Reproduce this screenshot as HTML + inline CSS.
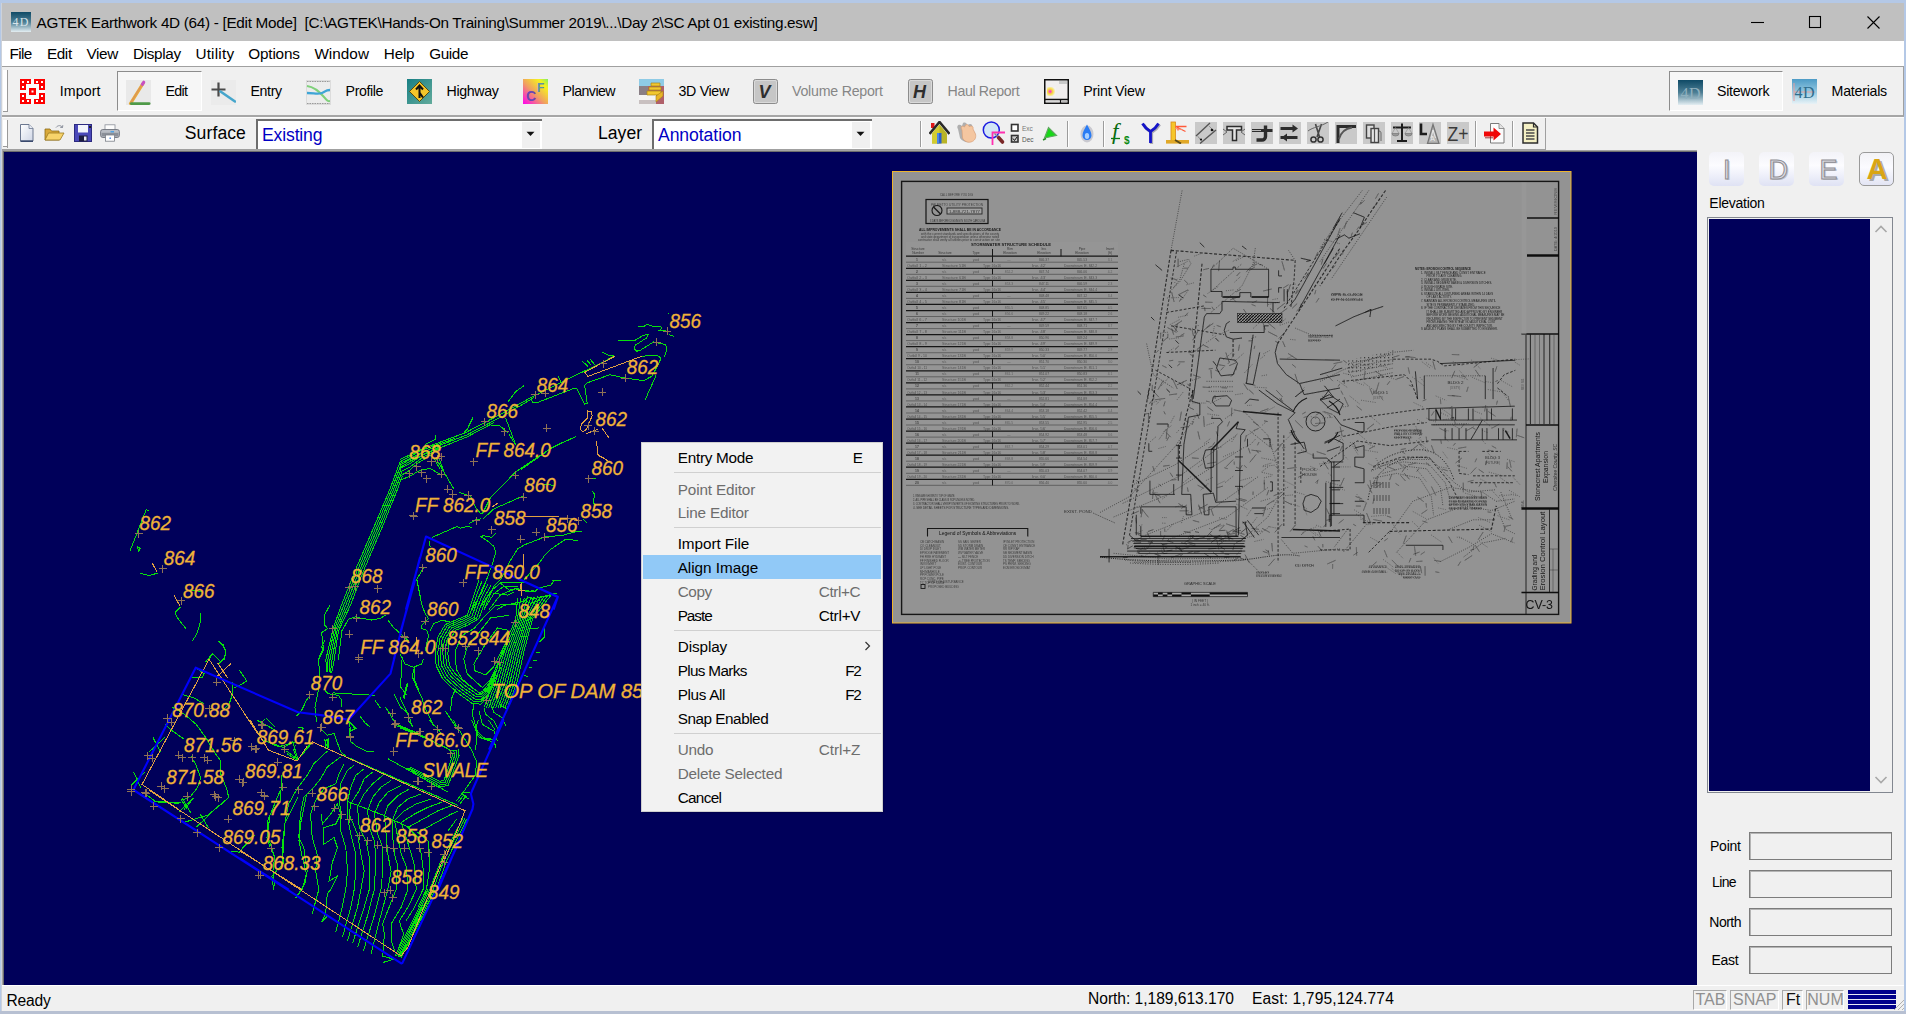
<!DOCTYPE html>
<html><head><meta charset="utf-8"><title>AGTEK Earthwork 4D</title>
<style>
html,body{margin:0;padding:0;}
body{width:1906px;height:1014px;overflow:hidden;position:relative;background:#f0f0f0;font-family:"Liberation Sans",sans-serif;font-size:15px;color:#000;}
.a{position:absolute;white-space:nowrap;}
.t{position:absolute;white-space:nowrap;line-height:20px;height:20px;}
#frame{left:0;top:0;width:1906px;height:1014px;background:#b4c8e6;}
#title{left:2px;top:3px;width:1902px;height:38px;background:#c0c0c0;}
#menubar{left:2px;top:41px;width:1902px;height:25px;background:#fff;}
#tb1{left:2px;top:66px;width:1902px;height:49px;background:#f0f0f0;border-top:1px solid #a0a0a0;box-sizing:border-box;}
#tb2{left:2px;top:113px;width:1902px;height:38px;background:#f0f0f0;border-top:2px solid #a8a8a8;box-sizing:border-box;}
#canvas{left:4px;top:152px;width:1693px;height:833px;background:#00005a;overflow:hidden;}
#rpanel{left:1697px;top:151px;width:207px;height:835px;background:#f0f0f0;}
#status{left:2px;top:985px;width:1902px;height:26px;background:#f0f0f0;}
.mi{top:43px;font-size:15.3px;}
.tbt{top:81px;font-size:14.6px;}
.gr{color:#838383;}
.lab{font-size:18.5px;top:122px;}
.combo{background:#fff;border-top:2px solid #696969;border-left:2px solid #696969;box-sizing:border-box;height:32px;top:118px;}
.combo span{position:absolute;left:3px;top:5px;font-size:18.5px;color:#0000c8;line-height:20px;}
.fld{border:1px solid #8a8a8a;border-top:2px solid #777;border-left:2px solid #777;box-sizing:border-box;background:#f0f0f0;left:1749px;width:143px;height:29px;}
.fl{font-size:14.5px;left:1709px;}
.ind{top:990px;height:19px;box-sizing:border-box;border:1px solid #b8b8b8;border-right-color:#fff;border-bottom-color:#fff;font-size:17px;color:#8a8a8a;line-height:19px;text-align:center;}
#cm{left:640.5px;top:441.5px;width:242.5px;height:370px;background:#f2f2f2;border:1px solid #cfcfcf;box-sizing:border-box;box-shadow:1px 1px 2px rgba(0,0,0,.18);}
.ci{left:36px;font-size:15.3px;line-height:20px;}
.ck{font-size:15.3px;line-height:20px;right:22px;}
.dis{color:#7a7a7a;}
.sep{left:33px;width:206px;height:1px;background:#d2d2d2;}
.lb{font-style:italic;fill:#f0b238;stroke:#f0b238;stroke-width:.3px;font-family:"Liberation Sans",sans-serif;font-size:20px;}
</style></head><body>
<div id="frame" class="a"></div>
<div id="title" class="a"></div>
<svg class="a" style="left:11px;top:12px" width="20" height="20"><defs><linearGradient id="g4d" x1="0" y1="0" x2="0" y2="1"><stop offset="0" stop-color="#0f4a66"/><stop offset=".5" stop-color="#4d7f95"/><stop offset="1" stop-color="#e4eef2"/></linearGradient></defs><rect width="20" height="20" fill="url(#g4d)"/><text x="1.5" y="14" font-family="Liberation Serif,serif" font-size="12" fill="#d8e4ea" textLength="16">4D</text></svg>
<div class="a" style="left:36.50px;top:13.65px;font-size:15.30px;line-height:17.59px;letter-spacing:-0.300px;white-space:pre;">AGTEK Earthwork 4D (64) - [Edit Mode]  [C:\AGTEK\Hands-On Training\Summer 2019\...\Day 2\SC Apt 01 existing.esw]</div>
<svg class="a" style="left:1740px;top:3px" width="160" height="38"><g stroke="#000" stroke-width="1.1" fill="none"><path d="M11 19.5H24"/><rect x="69.5" y="13.5" width="11" height="11"/><path d="M127.5 13.5L139.5 25.5M139.5 13.5L127.5 25.5"/></g></svg>
<div id="menubar" class="a"></div>
<div class="a" style="left:9.60px;top:45.35px;font-size:15.30px;line-height:17.59px;letter-spacing:-0.688px;">File</div>
<div class="a" style="left:46.90px;top:45.35px;font-size:15.30px;line-height:17.59px;letter-spacing:-0.366px;">Edit</div>
<div class="a" style="left:86.40px;top:45.35px;font-size:15.30px;line-height:17.59px;letter-spacing:-0.346px;">View</div>
<div class="a" style="left:132.90px;top:45.35px;font-size:15.30px;line-height:17.59px;letter-spacing:-0.309px;">Display</div>
<div class="a" style="left:195.40px;top:45.35px;font-size:15.30px;line-height:17.59px;letter-spacing:0.214px;">Utility</div>
<div class="a" style="left:248.30px;top:45.35px;font-size:15.30px;line-height:17.59px;letter-spacing:-0.189px;">Options</div>
<div class="a" style="left:314.40px;top:45.35px;font-size:15.30px;line-height:17.59px;letter-spacing:0.031px;">Window</div>
<div class="a" style="left:383.80px;top:45.35px;font-size:15.30px;line-height:17.59px;letter-spacing:-0.216px;">Help</div>
<div class="a" style="left:429.20px;top:45.35px;font-size:15.30px;line-height:17.59px;letter-spacing:-0.405px;">Guide</div>
<div id="tb1" class="a"></div>
<div class="a" style="left:2px;top:115px;width:1902px;height:2px;background:#a6a6a6"></div>
<div class="a" style="left:2px;top:117px;width:1902px;height:1px;background:#fbfbfb"></div>
<div class="a" style="left:2px;top:118px;width:1902px;height:33px;background:#f0f0f0"></div>
<div class="a" style="left:2px;top:149px;width:1544px;height:2px;background:#a0a0a0"></div>
<div class="a" style="left:1545px;top:118px;width:1px;height:32px;background:#a0a0a0"></div>
<div class="a" style="left:1px;top:3px;width:1px;height:1008px;background:#cdd2da"></div>
<div class="a" style="left:2px;top:151px;width:1695px;height:1px;background:#6e6e6e"></div>
<div class="a" style="left:2px;top:151px;width:1px;height:834px;background:#a2a2a2"></div>
<div class="a" style="left:3px;top:151px;width:1px;height:834px;background:#6e6e6e"></div>
<div class="a" style="left:3px;top:70px;width:4px;height:41px;background:#fff"></div>
<div class="a" style="left:3px;top:120px;width:4px;height:27px;background:#fff"></div>
<div class="a" style="left:3px;top:146px;width:5px;height:1px;background:#9a9a9a"></div>
<div class="a" style="left:3px;top:111px;width:5px;height:1px;background:#9a9a9a"></div>
<div class="a" style="left:2px;top:150px;width:1695px;height:1px;background:#a4a4a4"></div>
<div class="a" id="bottomstrip" style="left:0;top:1011px;width:1906px;height:3px;background:#b7c0d2"></div>
<div class="a" style="left:7px;top:70px;width:1px;height:41px;background:#9a9a9a"></div>
<div class="a" style="left:7px;top:120px;width:1px;height:28px;background:#9a9a9a"></div>
<div class="a" style="left:1903px;top:67px;width:1px;height:49px;background:#a0a0a0"></div>
<div class="a" style="left:117px;top:71px;width:85px;height:40px;background:#f6f6f6;box-sizing:border-box;border:1px solid #8c8c8c;border-right-color:#fff;border-bottom-color:#fff"></div>
<div class="a" style="left:1669px;top:71px;width:114px;height:40px;background:#f6f6f6;box-sizing:border-box;border:1px solid #8c8c8c;border-right-color:#fff;border-bottom-color:#fff"></div>
<div class="a" style="left:59.80px;top:82.65px;font-size:14.20px;line-height:16.33px;letter-spacing:0.110px;">Import</div>
<div class="a" style="left:165.40px;top:83.45px;font-size:14.20px;line-height:16.33px;letter-spacing:-0.617px;">Edit</div>
<div class="a" style="left:250.40px;top:82.65px;font-size:14.20px;line-height:16.33px;letter-spacing:-0.348px;">Entry</div>
<div class="a" style="left:345.60px;top:82.65px;font-size:14.20px;line-height:16.33px;letter-spacing:-0.407px;">Profile</div>
<div class="a" style="left:446.60px;top:82.65px;font-size:14.20px;line-height:16.33px;letter-spacing:-0.351px;">Highway</div>
<div class="a" style="left:562.60px;top:82.65px;font-size:14.20px;line-height:16.33px;letter-spacing:-0.541px;">Planview</div>
<div class="a" style="left:678.50px;top:82.65px;font-size:14.20px;line-height:16.33px;letter-spacing:-0.317px;">3D View</div>
<div class="a" style="left:792.00px;top:82.65px;font-size:14.20px;line-height:16.33px;letter-spacing:-0.233px;color:#868686;">Volume Report</div>
<div class="a" style="left:947.50px;top:82.65px;font-size:14.20px;line-height:16.33px;letter-spacing:-0.361px;color:#868686;">Haul Report</div>
<div class="a" style="left:1083.30px;top:82.65px;font-size:14.20px;line-height:16.33px;letter-spacing:-0.216px;">Print View</div>
<div class="a" style="left:1717.00px;top:83.45px;font-size:14.20px;line-height:16.33px;letter-spacing:-0.269px;">Sitework</div>
<div class="a" style="left:1831.60px;top:82.65px;font-size:14.20px;line-height:16.33px;letter-spacing:-0.245px;">Materials</div>
<svg class="a" style="left:20px;top:79px" width="25" height="25" viewBox="0 0 25 25" ><rect x="-.5" y="-.5" width="26" height="26" fill="#fbfbfb"/><g fill="#fe0000"><path d="M0 0h11v5h-5v6h-6z"/><path d="M25 0h-11v5h5v6h6z"/><path d="M0 25h11v-5h-5v-6h-6z"/><path d="M25 25h-11v-5h5v-6h6z"/><rect x="9" y="9" width="7" height="7"/></g><rect x="2" y="2" width="2" height="2" fill="#fff"/><rect x="7" y="2" width="2" height="2" fill="#fff"/><rect x="2" y="7" width="2" height="2" fill="#fff"/><rect x="21" y="2" width="2" height="2" fill="#fff"/><rect x="16" y="2" width="2" height="2" fill="#fff"/><rect x="21" y="7" width="2" height="2" fill="#fff"/><rect x="2" y="21" width="2" height="2" fill="#fff"/><rect x="7" y="21" width="2" height="2" fill="#fff"/><rect x="2" y="16" width="2" height="2" fill="#fff"/><rect x="21" y="21" width="2" height="2" fill="#fff"/><rect x="16" y="21" width="2" height="2" fill="#fff"/><rect x="21" y="16" width="2" height="2" fill="#fff"/><rect x="11.5" y="11.5" width="2" height="2" fill="#fff"/></svg>
<svg class="a" style="left:126px;top:80px" width="25" height="25" viewBox="0 0 25 25" ><rect width="25" height="25" fill="#e9e9e9"/><path d="M4.5 23.5L17 3.5" stroke="#e8a93a" stroke-width="3.2" stroke-linecap="round"/><path d="M16.2 4.6l1.6-2.4" stroke="#c74fc4" stroke-width="3" stroke-linecap="round"/><path d="M5.2 23.6h18" stroke="#4f9a48" stroke-width="2.6" stroke-linecap="round"/><path d="M5 22.3L15.8 4.8" stroke="#d48a6a" stroke-width=".9" fill="none"/></svg>
<svg class="a" style="left:211px;top:80px" width="25" height="25" viewBox="0 0 25 25" ><rect width="25" height="25" fill="#ebebeb"/><path d="M7.5 2.5v14M.5 9.5h14" stroke="#4a4a4a" stroke-width="2.2"/><path d="M9.5 11.5L24 21.5" stroke="#46a6cc" stroke-width="2.6" stroke-linecap="round"/></svg>
<svg class="a" style="left:306px;top:80px" width="25" height="25" viewBox="0 0 25 25" ><rect width="25" height="25" fill="#dcdcdc"/><rect x="1" y="2" width="23" height="21" fill="#ececec"/><path d="M1 6C8 7 13 11 18 17S23 21 24 21" stroke="#7fd07a" stroke-width="2" fill="none"/><path d="M1 13C8 13 12 14.5 16 13S19 10 24 10" stroke="#3fa5d6" stroke-width="2.4" fill="none"/><path d="M1 1.5h23M1 23.5h23" stroke="#9a9a9a" stroke-width="1" stroke-dasharray="1.5 1"/></svg>
<svg class="a" style="left:407px;top:79px" width="25" height="25" viewBox="0 0 25 25" ><defs><linearGradient id="hw" x1="0" y1="0" x2="1" y2="1"><stop offset="0" stop-color="#187f84"/><stop offset="1" stop-color="#63ab9c"/></linearGradient></defs><rect width="25" height="25" fill="url(#hw)"/><path d="M12.5 2.5L22.5 12.5L12.5 22.5L2.5 12.5Z" fill="#f5c62a" stroke="#5a4a10" stroke-width="1"/><path d="M12.5 19V7M9 10.5L12.5 6.5L16 10.5M12.8 14L16 18.5" stroke="#111" stroke-width="2" fill="none"/></svg>
<svg class="a" style="left:523px;top:79px" width="25" height="25" viewBox="0 0 25 25" ><defs><linearGradient id="pv" x1="0" y1="1" x2="1" y2="0"><stop offset="0" stop-color="#ff00f0"/><stop offset=".45" stop-color="#f0a060"/><stop offset=".8" stop-color="#f6f020"/><stop offset="1" stop-color="#80f060"/></linearGradient></defs><rect width="25" height="25" fill="url(#pv)"/><text x="3" y="22" font-family="Liberation Sans,sans-serif" font-weight="bold" font-size="14" fill="#6a46b4">C</text><text x="14" y="12.5" font-family="Liberation Sans,sans-serif" font-weight="bold" font-size="12" fill="#5a90b0">F</text></svg>
<svg class="a" style="left:639px;top:79px" width="25" height="25" viewBox="0 0 25 25" ><rect width="25" height="25" fill="#b0606a"/><rect width="25" height="7" fill="#8ecbe6"/><rect y="7" width="9" height="9" fill="#8a7f86"/><rect y="16" width="17" height="5" fill="#f4f4f4"/><rect y="21" width="17" height="4" fill="#c8c0c0"/><path d="M12 4h9v3h-9zM10 8h12v3h-12zM8 12h14v4h-14z" fill="#f2c730" stroke="#a88418" stroke-width=".7"/><path d="M17 17l7-5v5l-7 6z" fill="#e8b428" stroke="#a88418" stroke-width=".6"/></svg>
<svg class="a" style="left:753px;top:79px" width="25" height="25" viewBox="0 0 25 25" ><rect x=".5" y=".5" width="24" height="24" rx="2" fill="#c6c6c6" stroke="#8c8c8c"/><rect x="1.5" y="1.5" width="22" height="22" rx="1.5" fill="none" stroke="#dadada"/><text x="5.5" y="19" font-family="Liberation Sans,sans-serif" font-weight="bold" font-style="italic" font-size="18" fill="#2e2e2e">V</text></svg>
<svg class="a" style="left:908px;top:79px" width="25" height="25" viewBox="0 0 25 25" ><rect x=".5" y=".5" width="24" height="24" rx="2" fill="#c6c6c6" stroke="#8c8c8c"/><rect x="1.5" y="1.5" width="22" height="22" rx="1.5" fill="none" stroke="#dadada"/><text x="5" y="19" font-family="Liberation Sans,sans-serif" font-weight="bold" font-style="italic" font-size="18" fill="#2e2e2e">H</text></svg>
<svg class="a" style="left:1044px;top:79px" width="25" height="25" viewBox="0 0 25 25" ><defs><radialGradient id="pr" cx=".35" cy=".5" r=".6"><stop offset="0" stop-color="#ff20e0"/><stop offset=".5" stop-color="#f8e040"/><stop offset="1" stop-color="#f4f0f0"/></radialGradient></defs><rect x=".75" y=".75" width="23.5" height="23.5" fill="#f1eeee" stroke="#111" stroke-width="1.5"/><rect x="3" y="8" width="9" height="9" fill="url(#pr)"/><rect x="15" y="2" width="8" height="3" fill="#c9c9c9"/><path d="M1 20.5h23M16.5 20.5v4" stroke="#111" stroke-width="1.3"/><rect x="2" y="21.6" width="13.5" height="1.6" fill="#d8d8d8"/><rect x="17.6" y="21.6" width="5.6" height="1.6" fill="#bbb"/></svg>
<svg class="a" style="left:1678px;top:80px" width="25" height="25" viewBox="0 0 25 25" ><rect width="25" height="25" fill="url(#g4d)"/><text x="2.5" y="19" font-family="Liberation Serif,serif" font-size="16" fill="#8fb0be" textLength="20">4D</text></svg>
<svg class="a" style="left:1792px;top:79px" width="25" height="25" viewBox="0 0 25 25" ><defs><linearGradient id="mt" x1="0" y1="0" x2="0" y2="1"><stop offset="0" stop-color="#4d9bc6"/><stop offset=".55" stop-color="#9acbe2"/><stop offset="1" stop-color="#e8f2f6"/></linearGradient></defs><rect width="25" height="25" fill="url(#mt)"/><path d="M2 4v18M2 13h21" stroke="#e7a0a0" stroke-width="1"/><text x="2.5" y="19" font-family="Liberation Serif,serif" font-size="16" fill="#2f6c8c" textLength="20">4D</text></svg>
<svg class="a" style="left:20px;top:124px" width="16" height="18" viewBox="0 0 16 18" ><defs><linearGradient id="nd" x1="0" y1="0" x2="1" y2="1"><stop offset="0" stop-color="#fff"/><stop offset="1" stop-color="#cfd6e6"/></linearGradient></defs><path d="M.5 .5h8.5l4 4v12.5h-12.5z" fill="url(#nd)" stroke="#6c7890" stroke-width="1"/><path d="M9 .5v4h4" fill="#e8ecf4" stroke="#6c7890" stroke-width=".8"/><path d="M.5 17.2h12.5" stroke="#2c3e64" stroke-width="1.4"/></svg>
<svg class="a" style="left:44px;top:124px" width="21" height="18" viewBox="0 0 21 18" ><path d="M1 16V5h5l1.5 2H15v9z" fill="#d9a93a" stroke="#8a6a18" stroke-width=".8"/><path d="M1 16l3.5-7h15.5l-4 7z" fill="#f7d36a" stroke="#9a7a20" stroke-width=".8"/><path d="M12 3.5c2-2.5 5-2.5 6.5 0M18.5 3.5l.3-2.3M18.5 3.5l-2.3-.2" stroke="#8a8f9c" stroke-width="1" fill="none"/></svg>
<svg class="a" style="left:74px;top:124px" width="18" height="18" viewBox="0 0 18 18" ><rect x=".5" y=".5" width="17" height="17" fill="#4a48b8" stroke="#2c2a80"/><rect x="4" y="1" width="10" height="7.5" fill="#f2f4fb"/><rect x="5" y="11.5" width="8.5" height="6" fill="#1c1c40"/><rect x="10" y="12.5" width="2.5" height="4" fill="#e8e8f4"/><rect x="15" y="2" width="2" height="2" fill="#222"/></svg>
<svg class="a" style="left:100px;top:124px" width="20" height="18" viewBox="0 0 20 18" ><rect x="5" y=".8" width="10" height="6" fill="#fdfdfd" stroke="#8a8f98" stroke-width=".8"/><rect x=".6" y="5.5" width="18.8" height="8" rx="2.2" fill="#b9bdc4" stroke="#6e737c" stroke-width=".9"/><rect x="1.6" y="8.8" width="16.8" height="3.6" fill="#8b9098"/><rect x="5.5" y="11" width="9" height="6.2" fill="#fff" stroke="#7a7f88" stroke-width=".8"/><rect x="10.5" y="7.2" width="3.5" height="1.2" fill="#3a9be8"/><rect x="9.5" y="13.5" width="1.4" height="1.4" fill="#3a7fe0"/></svg>
<div class="a" style="left:184.80px;top:122.87px;font-size:17.60px;line-height:20.24px;letter-spacing:0.078px;">Surface</div>
<div class="a" style="left:597.90px;top:122.87px;font-size:17.60px;line-height:20.24px;letter-spacing:0.056px;">Layer</div>
<div class="a" style="left:256px;top:119px;width:285.5px;height:30px;background:#fff;box-sizing:border-box;border-top:2px solid #6d6d6d;border-left:2px solid #6d6d6d;"></div>
<div class="a" style="left:521.5px;top:122px;width:18px;height:26px;background:#f0f0f0;"></div>
<svg class="a" style="left:526px;top:131px" width="9" height="6"><path d="M.5 .8h8L4.5 5z" fill="#111"/></svg>
<div class="a" style="left:262.00px;top:125.07px;font-size:17.60px;line-height:20.24px;letter-spacing:-0.153px;color:#0000c4;">Existing</div>
<div class="a" style="left:652px;top:119px;width:219.5px;height:30px;background:#fff;box-sizing:border-box;border-top:2px solid #6d6d6d;border-left:2px solid #6d6d6d;"></div>
<div class="a" style="left:851.5px;top:122px;width:18px;height:26px;background:#f0f0f0;"></div>
<svg class="a" style="left:856px;top:131px" width="9" height="6"><path d="M.5 .8h8L4.5 5z" fill="#111"/></svg>
<div class="a" style="left:658.00px;top:125.07px;font-size:17.60px;line-height:20.24px;letter-spacing:-0.075px;color:#0000c4;">Annotation</div>
<div class="a" style="left:919.5px;top:121px;width:1px;height:26px;background:#9c9c9c"></div>
<div class="a" style="left:920.5px;top:121px;width:1px;height:26px;background:#fff"></div>
<div class="a" style="left:1067.3px;top:121px;width:1px;height:26px;background:#9c9c9c"></div>
<div class="a" style="left:1068.3px;top:121px;width:1px;height:26px;background:#fff"></div>
<div class="a" style="left:1103.3px;top:121px;width:1px;height:26px;background:#9c9c9c"></div>
<div class="a" style="left:1104.3px;top:121px;width:1px;height:26px;background:#fff"></div>
<div class="a" style="left:1475.4px;top:121px;width:1px;height:26px;background:#9c9c9c"></div>
<div class="a" style="left:1476.4px;top:121px;width:1px;height:26px;background:#fff"></div>
<div class="a" style="left:1511.5px;top:121px;width:1px;height:26px;background:#9c9c9c"></div>
<div class="a" style="left:1512.5px;top:121px;width:1px;height:26px;background:#fff"></div>
<svg class="a" style="left:929px;top:121px" width="21" height="23" viewBox="0 0 21 23" ><path d="M2 2h3.5v5H2z" fill="#e01818"/><path d="M.5 13L10.5 1l10 12" fill="none" stroke="#2a2a2a" stroke-width="2.6"/><path d="M3 12.5L10.5 3.5L18 12.5V22.5H3z" fill="#b8b428"/><path d="M3 12.5L10.5 3.5V22.5H3z" fill="#d2cc30"/><rect x="8" y="12" width="4.5" height="10.5" fill="#2a5fd0"/><rect x="8" y="12" width="2" height="10.5" fill="#4a86e8"/></svg>
<svg class="a" style="left:955px;top:121px" width="23" height="23" viewBox="0 0 23 23" ><path d="M3 8c-2-3 1-6 4-3l1-3c2-1 4 0 4 2l3-1c2 0 3 2 2 4l3 5c1 4-1 8-5 9c-4 1-8-1-10-4z" fill="#9a9a9a" opacity=".75"/><path d="M7 9c-2-3 0-5 2.5-3l1-2c2-1 3 0 3.500 1.500l2-.5c2 0 2.500 1.500 2 3l2.500 5c1 4-1 7-4.500 8c-3.500 1-7-1-8.500-4z" fill="#f4c6a0" stroke="#d89a70" stroke-width=".6"/></svg>
<svg class="a" style="left:982px;top:121px" width="25" height="24" viewBox="0 0 25 24" ><circle cx="9.3" cy="9" r="8" fill="#d2e6f6" stroke="#1c1ce0" stroke-width="1.5"/><path d="M10.5 24V11.500H23" fill="none" stroke="#ff30b0" stroke-width="1.8"/><path d="M16.500 16.500l4 4.500" stroke="#7a2828" stroke-width="3.600" stroke-linecap="round"/><path d="M12.500 12.500l3 3" stroke="#888" stroke-width="1.2"/></svg>
<svg class="a" style="left:1010px;top:123px" width="24" height="22" viewBox="0 0 24 22" ><rect x="1.500" y="1.500" width="6.500" height="6.500" fill="#fff" stroke="#333" stroke-width="1.6"/><rect x="1.500" y="12.500" width="6.500" height="6.500" fill="#ccc" stroke="#333" stroke-width="1.6"/><path d="M3 15.500l1.500 2 2.500-3.500" stroke="#111" stroke-width="1" fill="none"/><text x="12" y="7.500" font-size="6.500" fill="#777" font-family="Liberation Sans,sans-serif">Exc</text><text x="12" y="18.500" font-size="6.500" fill="#555" font-family="Liberation Sans,sans-serif">Dec</text></svg>
<svg class="a" style="left:1041px;top:124px" width="18" height="18" viewBox="0 0 18 18" ><path d="M3.500 14L7.500 3.500L15.500 11.500Z" fill="#18d818" stroke="#60a860" stroke-width="1.2"/><path d="M2 16l3-1.500" stroke="#2a8a2a" stroke-width="1.4"/></svg>
<svg class="a" style="left:1079px;top:123px" width="16" height="20" viewBox="0 0 16 20" ><ellipse cx="8" cy="11" rx="6.500" ry="8.500" fill="#9a9aa8" opacity=".45"/><path d="M8 1.500C10.500 6 12.500 9 12.500 12.500a4.500 4.500 0 0 1-9 0C3.500 9 5.500 6 8 1.500z" fill="#2a7cf4"/><ellipse cx="8" cy="13" rx="2.200" ry="3" fill="#a8d0ff"/></svg>
<svg class="a" style="left:1110px;top:121px" width="24" height="24" viewBox="0 0 24 24" ><text x="2" y="18" font-family="Liberation Serif,serif" font-style="italic" font-size="23" fill="#0a6a10">f</text><path d="M1 17.500h9" stroke="#0a7a12" stroke-width="1.300"/><text x="14" y="23" font-family="Liberation Sans,sans-serif" font-weight="bold" font-size="10" fill="#0a8a12">$</text></svg>
<svg class="a" style="left:1140px;top:122px" width="22" height="22" viewBox="0 0 22 22" ><path d="M2.500 1.500C5 6 8 8 10.500 9.500V21M18.500 1.500C16 6 13 8 10.500 9.500" fill="none" stroke="#7a7a88" stroke-width="3.200" transform="translate(1,1)" opacity=".6"/><path d="M2.500 1.500C5 6 8 8 10.500 9.500V21M18.500 1.500C16 6 13 8 10.500 9.500" fill="none" stroke="#1414c8" stroke-width="2.800"/></svg>
<svg class="a" style="left:1166px;top:121px" width="24" height="23" viewBox="0 0 24 23" ><rect x="5" y="1" width="4.500" height="18.500" fill="#f6c62a" stroke="#d88a18" stroke-width=".8"/><path d="M9.500 5.500h11M9.500 5.500l10 5M12 5.500v4" stroke="#ff5a3a" stroke-width="1.300"/><path d="M9 7.500l7 1" stroke="#ff8a6a" stroke-width="1"/><rect x="0" y="19" width="23" height="3.600" fill="#e0a828"/><path d="M9 19l6 3.500" stroke="#5a4a18" stroke-width="2"/></svg>
<svg class="a" style="left:1194.85px;top:122px" width="22" height="22" viewBox="0 0 22 22" ><rect width="22" height="22" fill="#c9c9c9"/><path d="M1 14L15 1M5 21.500L21 8" stroke="#555" stroke-width="1.400"/><path d="M3 14.500l4 5M14.500 4.500l4 4" stroke="#666" stroke-width="1" stroke-dasharray="1.500 1"/><circle cx="17" cy="8" r="1.300" fill="#111"/><circle cx="6" cy="17.500" r="1.100" fill="#111"/></svg>
<svg class="a" style="left:1222.88px;top:122px" width="22" height="22" viewBox="0 0 22 22" ><rect width="22" height="22" fill="#c9c9c9"/><path d="M4 4.500h14.500v3.500H13.500v10.500H9.500V8H4z" fill="#e4e4e4" stroke="#2c2c2c" stroke-width="1.500"/><path d="M0 7l4 3-4 3M22 7l-4 3 4 3" stroke="#666" stroke-width="1" fill="none"/></svg>
<svg class="a" style="left:1250.91px;top:122px" width="22" height="22" viewBox="0 0 22 22" ><rect width="22" height="22" fill="#c9c9c9"/><path d="M14.500 3.500V14.500a3.500 3.500 0 0 1-3.500 3.500H5.500" fill="none" stroke="#2c2c2c" stroke-width="3.400"/><path d="M1 8.500h20.500" stroke="#2c2c2c" stroke-width="3"/><path d="M1 8.500h9" stroke="#ddd" stroke-width=".8"/></svg>
<svg class="a" style="left:1278.94px;top:122px" width="22" height="22" viewBox="0 0 22 22" ><rect width="22" height="22" fill="#c9c9c9"/><path d="M1.500 6.500h15M1.500 15.500h17" stroke="#2c2c2c" stroke-width="2.800"/><path d="M13.500 2.500l5.500 4-5.500 4zM8 11.500l-5.500 4 5.500 4z" fill="#2c2c2c"/></svg>
<svg class="a" style="left:1306.97px;top:122px" width="22" height="22" viewBox="0 0 22 22" ><rect width="22" height="22" fill="#c9c9c9"/><path d="M8.500 2l4 13M14.500 2l-4.500 13" stroke="#444" stroke-width="1.600"/><circle cx="6.500" cy="17.500" r="2.600" fill="none" stroke="#333" stroke-width="1.500"/><circle cx="13.500" cy="17.500" r="2.600" fill="none" stroke="#333" stroke-width="1.500"/><path d="M1 9c5-4 12-4 20-9" stroke="#666" stroke-width="1" fill="none"/></svg>
<svg class="a" style="left:1335px;top:122px" width="22" height="22" viewBox="0 0 22 22" ><rect width="22" height="22" fill="#c9c9c9"/><path d="M3 21V4.500h18" fill="none" stroke="#2c2c2c" stroke-width="3"/><path d="M4 17C6 10 10 6.500 17 5.500" fill="none" stroke="#555" stroke-width="1.800"/></svg>
<svg class="a" style="left:1363.03px;top:122px" width="22" height="22" viewBox="0 0 22 22" ><rect width="22" height="22" fill="#c9c9c9"/><rect x="3.500" y="3" width="7.500" height="13" fill="#ddd" stroke="#444" stroke-width="1.400"/><rect x="8" y="6.500" width="7.500" height="14" fill="#e4e4e4" stroke="#444" stroke-width="1.400"/><path d="M11.500 7v13" stroke="#555" stroke-width="1.200"/><path d="M16 9c2 0 2 1.500 2 3v7" stroke="#666" stroke-width="1" fill="none"/></svg>
<svg class="a" style="left:1391.06px;top:122px" width="22" height="22" viewBox="0 0 22 22" ><rect width="22" height="22" fill="#c9c9c9"/><path d="M11 1.500v16.500M2 5.500h18M6 19h10" stroke="#1c1c1c" stroke-width="2"/><path d="M1 11.500a3.500 2.500 0 0 0 7 0zM14 11.500a3.500 2.500 0 0 0 7 0z" fill="#999" stroke="#777" stroke-width=".7"/><path d="M4.500 5.500l-3.500 6M4.500 5.500l3.500 6M17.500 5.500l-3.500 6M17.500 5.500l3.500 6" stroke="#888" stroke-width=".6"/></svg>
<svg class="a" style="left:1419.09px;top:122px" width="22" height="22" viewBox="0 0 22 22" ><rect width="22" height="22" fill="#c9c9c9"/><path d="M2 1.500V12h6" fill="none" stroke="#1c1c1c" stroke-width="2.600"/><path d="M14 2.500L8.500 21.500H20z" fill="#b4b4b4" stroke="#777" stroke-width="1.300"/><path d="M14 8l-2 8M14 8l2.500 8" stroke="#eee" stroke-width=".9"/><text x="11.300" y="19" font-size="7" fill="#eee" font-family="Liberation Sans,sans-serif">A</text></svg>
<svg class="a" style="left:1447.12px;top:122px" width="22" height="22" viewBox="0 0 22 22" ><rect width="22" height="22" fill="#c9c9c9"/><text x=".5" y="18.500" font-family="Liberation Sans,sans-serif" font-size="20" fill="#3a3a3a" textLength="21" lengthAdjust="spacingAndGlyphs">Z+</text></svg>
<svg class="a" style="left:1484px;top:122px" width="22" height="22" viewBox="0 0 22 22" ><path d="M6.500 1.500h8.500l5 5V21H6.500z" fill="#fbfbfb" stroke="#7a7a7a" stroke-width="1"/><path d="M15 1.500v5h5" fill="#e4e4e4" stroke="#7a7a7a" stroke-width=".8"/><path d="M0 9.500h9.500V5.500L17 12l-7.500 6.500V14.500H0z" fill="#f00808"/><path d="M1 15.800h8" stroke="#8a1010" stroke-width=".8"/></svg>
<svg class="a" style="left:1522px;top:122px" width="17" height="22" viewBox="0 0 17 22" ><path d="M1 1h10.500l4 4V21H1z" fill="#f4f0c4" stroke="#2c2c2c" stroke-width="1.500"/><path d="M11.500 1v4h4" fill="none" stroke="#2c2c2c" stroke-width="1.200"/><path d="M4 8h8.500M4 11h8.500M4 14h8.500M4 17h8.500" stroke="#4a4a4a" stroke-width="1.300"/></svg>
<div id="canvas" class="a">
<svg class="a" style="left:-4px;top:-152px" width="1906" height="1014" viewBox="0 0 1906 1014">
<g fill="none" stroke="#06e00c" stroke-width="1" shape-rendering="crispEdges"><path d="M400.0 459.5L425.2 447.8L465.5 432.6L500.7 414.2L534.3 395.7L567.9 378.9L601.5 363.0L613.2 356.2M400.0 463.7L426.9 450.3L466.3 435.2L502.4 416.2L534.3 397.4M400.0 467.6L410.1 461.2L428.5 452.5L467.2 436.8L494.0 422.6M531.0 399.1L532.6 402.4L537.7 402.4L574.6 388.1L577.1 389.0L584.7 404.1L587.2 403.3L584.7 385.6L586.4 383.1L609.9 374.7L625.0 378.1L643.5 380.6L651.8 376.4L658.6 363.8L661.1 357.9L656.9 355.4L641.8 356.2M637.6 326.5L643.5 326.9L646.8 324.3L651.8 326.0L660.2 326.0L661.9 328.5L659.4 330.2L667.0 331.1M668.6 334.4L673.7 336.1M667.8 312.6L669.5 314.3M618.3 340.3L635.1 340.3L643.5 335.3L648.5 334.4L646.8 337.8L635.1 345.3L634.2 348.7L636.7 351.2L640.1 350.4L653.5 342.0L656.9 342.8L665.3 344.5L667.0 348.7L664.4 357.1M656.0 375.6L645.1 399.9M602.3 352.4L609.0 355.4L614.1 355.4M582.2 361.3L588.0 366.3M586.4 359.6L591.4 365.5M589.7 358.8L594.8 364.6M524.2 385.6L515.8 391.5L507.5 402.4M557.8 375.6L561.2 382.3M473.0 417.5L467.2 429.3L464.6 431.8M435.3 435.2L435.3 439.4L425.2 444.4M490.7 424.2L491.5 425.6L499.1 425.1L507.5 432.6M505.8 418.4L515.8 445.2M509.1 434.3L515.8 445.2M576.3 436.3L551.9 447.8L520.9 469.6M433.6 457.8L440.3 469.6M400.0 461.8L421.8 450.1L455.4 438.3M400.0 465.2L422.7 452.1L442.0 444.2M400.0 468.5L410.1 463.5L423.5 454.3L440.3 446.7M400.0 471.9L410.1 466.9L423.5 456.8L438.6 449.2M400.0 476.1L408.4 471.1L418.5 462.7L433.6 453.4M436.1 458.5L453.7 488.7M439.5 459.3L444.5 473.6M400.0 480.3L410.1 476.1L420.1 470.2L430.2 468.5L442.0 475.3M458.8 492.4L470.5 496.2L475.6 507.2L480.6 513.5L483.9 512.2M567.9 440.0L551.9 447.6L515.8 471.9L490.7 497.1L482.3 513.9M522.6 496.2L494.0 508.8L483.1 518.9M544.4 484.5L554.5 485.3M468.8 523.9L475.6 519.8L480.6 518.9M431.9 537.4L457.1 526.5L460.4 528.1L467.2 526.5L472.2 527.3M480.3 536.5L483.9 535.7L491.5 537.4L495.7 533.2M480.3 536.5L487.3 540.7L494.0 546.6L495.7 552.5L492.3 564.2L482.3 591.1L472.2 609.6M429.4 540.7L430.2 547.5M423.5 567.6L416.8 579.4L421.8 604.5M582.2 531.5L576.3 531.5L561.2 535.7L546.1 536.5L524.2 544.9L517.5 549.1L509.1 562.6L500.7 579.4L494.0 586.1L483.9 609.6M578.0 540.4L565.4 539.4L551.1 549.1L544.4 555.8L537.7 565.1L524.2 579.4M592.2 491.2L594.8 494.6L593.1 502.1L595.6 506.3M586.4 478.6L596.4 478.6M583.0 518.9L587.2 523.1M561.2 580.2L553.6 580.7L551.1 585.2L539.4 587.8L534.3 591.9L525.1 590.3L515.8 589.4M525.1 582.7L500.7 582.7L490.7 591.1L478.9 609.6M517.5 586.1L504.1 586.1L494.0 593.6L483.9 609.6M514.2 589.4L500.7 594.5L489.0 609.6M557.0 593.1L534.3 598.7L527.6 597.0L524.2 601.2L504.1 605.4L497.4 609.6M478.9 580.0L473.9 595.1L467.2 615.3L457.1 619.5L445.3 624.5L437.8 637.1L435.3 652.2L436.1 665.6L442.8 679.1L457.1 692.5L472.2 703.4L480.6 704.2L487.3 697.5L494.0 684.1M481.9 581.3L476.2 596.1L469.5 615.9L459.1 620.6L447.3 625.7L440.0 638.1L437.8 652.5L438.8 665.6L445.3 678.1L459.1 690.8L473.5 701.2L480.9 701.7L487.3 695.2L494.4 681.4M485.0 582.7L478.6 597.1L471.9 616.6L461.1 621.8L449.4 626.8L442.1 639.1L440.3 652.9L441.5 665.6L447.9 677.0L461.1 689.1L474.9 699.0L481.3 699.2L487.3 692.8L494.7 678.7M488.0 584.0L480.9 598.1L474.2 617.3L463.1 623.0L451.4 628.0L444.3 640.1L442.8 653.2L444.2 665.6L450.4 676.0L463.1 687.5L476.2 696.9L481.6 696.7L487.3 690.5L495.0 676.0M491.0 585.4L483.3 599.1L476.6 617.9L465.1 624.2L453.4 629.2L446.5 641.1L445.3 653.5L446.8 665.6L452.9 675.0L465.1 685.8L477.6 694.7L481.9 694.2L487.3 688.1L495.4 673.4M494.0 586.7L485.6 600.1L478.9 618.6L467.2 625.3L455.4 630.4L448.7 642.1L447.9 653.9L449.5 665.6L455.4 674.0L467.2 684.1L478.9 692.5L482.3 691.7L487.3 685.8L495.7 670.7M517.5 604.3L495.7 605.2L485.6 615.3L473.9 628.7L462.1 635.4L455.4 650.5L456.2 669.0L462.1 679.1L480.6 694.2L490.7 687.5L500.7 667.3M509.1 615.3L490.7 617.8L480.6 630.4L467.2 647.2L463.8 658.9L467.2 674.0L482.3 687.5L490.7 679.1L510.8 635.4M508.3 630.4L497.4 627.9L485.6 643.8L473.9 663.9L474.7 670.7L485.6 674.9L493.2 667.3L507.5 638.8M517.5 598.5L515.8 618.6L502.4 650.5L491.5 687.5L483.9 707.6M520.9 598.1L517.5 618.6L504.6 650.5L494.1 686.8L486.3 707.6M524.2 597.8L519.2 618.6L506.8 650.5L496.7 686.1L488.7 707.6M527.6 597.5L520.9 618.6L509.0 650.5L499.3 685.4L491.0 707.6M531.0 597.1L522.6 618.6L511.1 650.5L501.9 684.8L493.4 707.6M534.3 596.8L524.2 618.6L513.3 650.5L504.5 684.1L495.7 707.6M537.7 596.5L525.9 618.6L515.5 650.5L507.1 683.4L498.1 707.6M541.0 596.1L527.6 618.6L517.7 650.5L509.7 682.8L500.4 707.6M544.4 595.8L529.3 618.6L519.9 650.5L512.3 682.1L502.8 707.6M547.8 595.4L531.0 618.6L522.1 650.5L514.9 681.4L505.1 707.6M551.1 595.1L532.6 618.6L524.2 650.5L517.5 680.7L507.5 707.6M483.9 707.6L485.6 714.3L494.0 721.0L499.1 731.1M490.7 704.2L494.0 712.6L502.4 717.7L505.8 726.1M497.4 697.5L500.7 705.9L507.5 709.3M478.9 711.0L482.3 724.4L494.0 731.1L497.4 741.2M473.9 704.2L472.2 714.3L477.2 731.1L475.6 749.6M477.2 731.1L483.9 737.8L494.0 739.5L495.7 747.9M421.8 604.5L425.2 613.6L428.5 618.6L421.8 625.3L421.8 628.7L426.9 630.4L428.5 635.4L425.2 650.5M416.8 580.0L421.8 604.5M400.0 653.9L405.0 663.9L413.4 667.3L421.8 663.9L423.5 658.9M413.4 669.0L412.6 677.4L416.8 687.5L421.8 697.5L423.5 704.2L433.6 726.1M400.0 697.5L410.1 719.4L411.8 726.1M406.7 684.1L403.4 697.5M455.4 689.1L452.0 697.5L450.4 711.0M445.3 711.0L455.4 726.1L458.8 731.1M400.0 727.8L416.8 734.5L447.0 747.9M450.4 622.0L442.0 620.3L433.6 623.7L430.2 630.4M544.4 625.3L544.4 637.1L539.4 642.1M536.0 652.2L540.2 652.2M532.6 660.6L536.8 660.6M529.3 667.3L532.6 668.1M524.2 675.7L528.4 676.5M527.6 628.7L539.4 627.9M551.9 580.0L561.2 580.8M527.6 596.8L534.3 598.5L551.1 595.1M524.2 600.1L531.0 603.5L539.4 600.1M500.7 583.4L509.1 590.1L517.5 588.4L527.6 591.8L534.3 590.1M494.0 593.4L507.5 595.1L514.2 591.8M344.1 756.1L458.3 805.6M347.5 757.3L456.6 804.8M387.8 758.6L448.2 792.2M458.3 749.4L459.1 755.3L448.2 785.5L438.1 787.2L406.2 768.7M456.0 750.2L456.9 755.5L446.8 783.8L438.7 785.2L407.3 768.1M453.8 751.1L454.6 755.8L445.4 782.1L439.2 783.2L408.5 767.6M451.6 751.9L452.4 756.1L444.0 780.4L439.8 781.3L409.6 767.0M282.0 775.4L280.3 800.6L270.2 814.0L266.9 837.5L270.2 847.6M327.3 751.1L313.9 763.7L307.2 775.4L297.1 788.8L288.7 803.9L285.3 820.7L282.0 847.6L283.7 862.7L271.9 876.1L273.6 889.6M340.7 756.9L327.3 767.0L320.6 778.8L313.9 787.2L303.8 797.2L300.4 814.0L298.8 837.5L303.8 847.6L307.2 871.1L302.1 889.6M344.1 763.7L339.1 773.7L335.7 783.8L323.9 788.8L315.6 800.6L310.5 814.0L312.2 837.5L317.2 854.3L315.6 871.1L318.9 889.6M321.4 814.0L322.3 824.1L330.7 814.0L337.4 803.9L340.7 814.0L335.7 824.1L323.9 827.5L323.9 844.2L334.0 837.5L337.4 847.6L332.3 862.7L329.0 881.2L337.4 876.1L330.7 889.6M354.2 765.3L347.5 770.4L340.7 783.8L339.1 795.6L340.7 814.0L340.7 830.8L345.8 847.6L347.5 871.1L345.8 889.6M364.2 768.7L355.8 775.4L350.8 787.2L347.5 800.6L347.5 817.4L350.8 834.2L355.8 854.3L355.8 871.1L354.2 889.6M372.6 772.0L364.2 778.8L359.2 790.5L350.8 803.9L349.1 814.0L357.5 834.2L360.9 854.3L364.2 871.1L360.9 889.6M382.7 775.4L372.6 783.8L364.2 793.9L357.5 807.3L359.2 827.5L365.9 840.9L369.3 857.7L369.3 889.6M391.1 780.4L381.0 787.2L372.6 797.2L367.6 810.7L369.3 827.5L374.3 840.9L376.0 857.7L374.3 889.6M401.2 785.5L387.8 792.2L379.4 802.3L374.3 814.0L377.7 834.2L382.7 847.6L382.7 871.1L381.0 889.6M409.6 788.8L397.8 795.6L387.8 805.6L384.4 815.7L386.1 834.2L387.8 854.3L391.1 871.1L387.8 889.6M421.3 793.9L407.9 798.9L397.8 807.3L392.8 819.1L392.8 837.5L394.5 854.3L397.8 866.1L396.1 889.6M431.4 798.9L416.3 803.9L404.5 810.7L394.5 820.7L397.8 837.5L401.2 854.3L406.2 866.1L407.9 889.6M441.5 802.3L428.0 807.3L414.6 814.0L401.2 822.4L406.2 837.5L411.3 854.3L414.6 866.1L416.3 889.6M451.6 805.6L438.1 810.7L423.0 819.1L407.9 827.5L418.0 837.5L421.3 854.3L423.0 867.8L423.0 889.6M458.3 810.7L448.2 815.7L433.1 824.1L418.0 832.5L428.0 840.9L429.7 854.3L429.7 867.8L426.4 889.6M347.5 801.4L384.4 815.7L394.5 820.7L409.6 827.5M429.7 889.6L441.5 859.4L463.3 817.4M433.1 889.6L444.0 860.2L465.0 818.2M436.4 889.6L446.5 861.0L466.7 819.1M320.6 728.4L327.3 735.1L334.0 733.4L340.7 751.9L345.8 756.1M349.1 728.4L350.8 741.8L357.5 746.9L365.9 751.1L374.3 751.9M350.8 723.4L355.8 728.4L349.1 731.8M323.9 738.5L327.3 746.9L328.1 738.5M394.5 725.0L418.0 733.4L449.9 750.2L456.6 750.2M407.9 720.0L412.9 726.7M429.7 720.0L441.5 733.4M453.2 720.0L463.3 736.8L471.7 750.2L476.7 762.0L475.1 775.4L463.3 792.2L456.6 800.6M471.7 720.0L478.4 736.8L491.8 741.8M488.5 720.0L495.2 730.1M478.4 720.0L475.1 730.1L481.8 738.5L493.5 740.1M463.3 792.2L470.0 792.2M456.6 800.6L461.6 793.9L465.8 795.6M458.3 802.3L463.3 795.6L467.5 797.2M459.9 803.9L465.0 797.2L469.2 798.9M297.1 760.3L293.7 750.2L295.4 745.2M287.0 753.6L297.1 760.3L308.8 746.9L312.2 741.8M256.8 720.0L275.3 730.1M263.5 740.1L278.6 746.9L295.4 741.8M448.2 830.8L456.6 819.1M302.1 889.5L295.4 897.9M318.9 889.5L317.2 895.4L312.2 913.9M330.7 889.5L327.3 893.7L325.6 913.9L321.4 922.3M345.8 889.5L340.7 913.9L335.7 932.3M354.2 889.5L350.8 907.2L342.4 937.4M360.9 889.5L357.5 907.2L347.5 940.7M369.3 889.5L364.2 907.2L352.5 943.3M374.3 889.5L367.6 915.6L357.5 947.5M381.0 889.5L374.3 915.6L363.4 950.8M387.8 889.5L379.4 920.6L371.0 954.2M396.1 889.5L387.8 910.5L382.7 923.9L384.4 934.0L382.7 957.5M407.9 889.5L401.2 907.2L391.1 923.9L391.1 940.7L394.5 950.8M416.3 889.5L407.9 907.2L399.5 920.6L401.2 927.3L403.7 934.0L397.8 950.8M423.0 889.5L414.6 907.2L406.2 920.6M426.4 889.5L418.0 907.2M428.0 889.5L412.9 920.6L395.3 955.8M429.9 889.5L414.6 920.3L396.5 956.2M431.7 889.5L416.3 919.9L397.7 956.5M433.6 889.5L418.0 919.6L398.8 956.9M435.4 889.5L419.7 919.2L400.0 957.2M437.3 889.5L421.3 918.9L401.2 957.5M382.7 962.6L393.6 959.2L387.8 957.5L382.7 955.8M321.4 922.3L327.3 916.4M400.0 462.0L389.6 490.0L375.4 523.6L355.2 570.6L341.8 604.2L333.4 627.7L325.8 659.6M400.6 465.5L391.5 490.0L377.5 523.6L357.3 570.6L343.9 604.6L334.6 628.5L327.9 659.6M401.1 469.0L393.4 490.0L379.6 523.6L359.4 570.6L346.0 605.0L335.9 629.4L330.0 659.6M401.7 472.5L395.3 490.0L381.6 523.6L361.5 570.6L348.1 605.4L337.2 630.2L332.1 659.6M402.2 476.1L397.2 490.0L383.7 523.6L363.6 570.6L350.2 605.8L338.4 631.0L334.2 659.6M330.0 605.0L325.0 614.2L324.1 624.3L327.5 628.5L321.6 632.7L323.3 647.8L318.3 659.6M338.4 659.6L341.8 631.0L348.5 619.3L355.2 616.8L361.9 618.4L372.0 620.1L380.4 618.4L385.4 615.1M387.9 620.1L393.8 627.7L400.5 633.6L408.9 641.1M130.2 550.4L146.2 509.8L149.5 510.5M137.3 546.2L140.3 548.8L138.6 551.3L137.3 546.2M140.3 573.1L148.7 575.6L157.9 573.1M180.6 606.7L175.2 612.6L177.2 617.6L186.5 629.4M200.7 613.4L199.9 624.3L196.5 634.4L192.3 640.8M218.4 641.1L223.4 646.1L225.9 652.0L224.2 659.6M209.1 659.6L212.5 653.7L217.5 658.7M191.5 590.4L202.4 591.4M218.4 640.8L223.4 645.0L225.9 651.8L224.2 658.5L219.2 663.5M205.8 661.8L212.5 653.4L220.9 661.8M239.4 670.2L246.9 681.1L241.0 684.5L234.3 687.9M195.7 667.7L204.1 673.6L202.4 677.3L192.3 677.8M232.6 682.0L232.6 693.7L229.3 703.8L224.2 708.8M182.3 694.6L194.0 697.9L204.1 703.8M172.2 707.2L183.9 713.9L195.7 723.9L205.8 737.4L215.8 754.2L220.9 760.9L220.9 774.3L227.6 791.1L228.4 797.8L214.2 809.6M164.6 723.9L172.2 730.7L183.9 739.1M190.7 755.8L195.7 764.2L200.7 777.7L197.4 787.8L190.7 796.1L183.9 799.5M147.0 795.3L155.4 801.2L167.2 802.0L178.9 803.7M152.9 737.4L160.4 751.7M149.5 751.7L164.6 737.4M133.6 771.8L141.1 788.6M131.1 785.2L145.3 771.8M180.6 798.7L187.3 809.6M194.0 797.8L183.9 809.6M325.8 659.6L326.7 671.9M327.9 659.6L327.9 672.1M330.0 659.6L329.2 672.3M332.1 659.6L330.4 672.5M334.2 659.6L331.7 672.7M318.3 660.1L323.3 650.1L321.6 646.7L325.0 640.0M316.6 722.3L314.9 707.2L318.3 690.4L319.9 673.6L318.3 660.1M296.4 716.4L301.5 710.5L306.5 700.4L309.9 695.4M325.0 690.4L328.3 693.7L338.4 695.4L341.8 700.4L341.8 707.2M333.4 692.9L375.4 695.4M374.5 699.6L380.4 708.0M385.4 707.2L388.8 712.2L395.5 723.9L420.0 734.0M393.8 693.7L400.5 707.2L408.9 713.9M408.1 682.8L403.9 699.6M402.2 656.8L400.5 687.0L407.3 695.4M414.0 666.9L414.0 678.6L419.0 690.4M360.2 716.4L365.3 723.1L370.3 727.3M348.5 720.6L355.2 729.0L351.0 730.7L348.5 720.6M325.0 740.7L328.3 739.1L328.3 747.5L325.0 749.1L325.0 740.7M265.4 718.9L261.2 722.3M266.2 718.1L275.5 727.3M298.1 727.3L303.2 728.1L301.5 731.5M292.2 740.7L298.1 759.2L309.9 744.1M286.4 750.8L297.3 759.2M274.6 744.1L283.0 747.5L293.1 742.4M182.3 798.4L190.7 812.7M178.9 811.8L193.2 798.4M199.9 813.5L208.3 827.8M196.5 826.9L210.8 813.5M148.7 795.9L155.4 801.8L167.2 802.6L180.6 802.6M227.6 790.0L228.4 797.6L224.2 801.8L207.5 815.2L185.6 821.9M254.5 835.3L242.7 847.9L239.4 852.1L231.0 851.3M280.5 790.0L267.9 820.2L267.9 837.0L274.6 857.2L272.9 870.6L274.6 885.7M298.1 796.7L284.7 823.6L283.0 853.8L281.3 868.9M306.5 795.0L300.6 823.6L299.0 840.4L301.5 853.8L306.5 873.9L304.8 884.0L295.6 898.3"/></g>
<g fill="none" stroke="#e0a040" stroke-width="1" shape-rendering="crispEdges"><path d="M584.7 372.2L588.0 376.4L641.8 356.2M584.7 372.2L614.9 356.2M587.2 410.8L591.4 411.7L592.2 415.8L586.4 429.3L583.0 431.8L580.5 429.3L581.3 424.2L588.0 417.5L587.2 410.8M601.5 427.6L609.0 437.7M586.4 433.5L598.1 429.3M596.4 441.0L598.1 455.3L601.5 457.0L608.2 461.2M596.4 440.8L598.1 455.1L601.5 456.8L608.2 461.0M525.1 516.4L558.7 516.4M523.4 554.2L523.4 567.6M520.9 584.4L521.2 596.1M491.5 507.2L498.2 503.0M521.2 583.4L521.2 596.0M517.5 590.4L525.1 590.4M416.0 637.1L416.8 646.3M250.1 720.0L268.5 750.2L297.1 761.1L307.2 746.0M312.2 741.8L465.0 810.7L458.3 827.5L443.2 862.7M240.0 851.0L302.1 889.6M394.5 951.7L401.2 955.8L407.9 947.5L446.5 850.1M152.4 563.4L157.1 572.3M173.9 594.9L179.8 605.8M178.9 809.6L142.0 784.4L209.1 659.3L257.8 734.0M217.5 662.7L227.6 677.8M231.0 663.5L217.5 676.1M148.7 790.0L394.5 951.7"/></g>
<g fill="none" stroke="#0000fc" stroke-width="2.1" stroke-linejoin="round"><path d="M405.9 609.6L426.0 536.5L557.8 597.0L553.6 609.6M415.1 580.0L400.0 633.7M520.9 580.0L557.8 596.8L489.0 749.6M503.6 720.0L472.5 789.7L470.9 793.9L473.4 803.9L472.5 809.0L438.1 889.6M240.0 858.5L288.7 889.6M402.0 963.9L459.9 840.0M420.0 557.2L393.8 659.6M133.6 789.4L195.7 667.7L298.1 712.2L325.0 715.6L348.5 719.8L390.5 673.6L395.5 653.4L398.9 640.0M133.6 790.0L402.0 963.9"/></g>
<g fill="none" stroke="#8f7256" stroke-width="1" shape-rendering="crispEdges"><path d="M663.0 331.1h8M667.0 327.1v8M652.9 342.0h8M656.9 338.0v8M599.2 363.5h8M603.2 359.5v8M621.0 378.1h8M625.0 374.1v8M598.3 392.0h8M602.3 388.0v8M531.2 394.9h8M535.2 390.9v8M541.2 393.2h8M545.2 389.2v8M480.8 421.7h8M484.8 417.7v8M500.9 431.8h8M504.9 427.8v8M542.9 428.4h8M546.9 424.4v8M584.0 425.9h8M588.0 421.9v8M590.8 431.0h8M594.8 427.0v8M469.9 461.5h8M473.9 457.5v8M437.1 456.5h8M441.1 452.5v8M433.8 458.7h8M437.8 454.7v8M427.1 461.5h8M431.1 457.5v8M469.9 461.5h8M473.9 457.5v8M511.0 475.3h8M515.0 471.3v8M422.9 478.6h8M426.9 474.6v8M443.9 489.0h8M447.9 485.0v8M448.9 494.1h8M452.9 490.1v8M464.0 495.4h8M468.0 491.4v8M409.4 515.9h8M413.4 511.9v8M472.4 520.6h8M476.4 516.6v8M519.4 497.1h8M523.4 493.1v8M584.9 478.6h8M588.9 474.6v8M487.5 529.8h8M491.5 525.8v8M532.0 532.3h8M536.0 528.3v8M516.9 539.4h8M520.9 535.4v8M540.7 537.4h8M544.7 533.4v8M563.9 518.9h8M567.9 514.9v8M574.0 520.6h8M578.0 516.6v8M418.7 567.6h8M422.7 563.6v8M459.0 582.7h8M463.0 578.7v8M405.2 473.6h8M409.2 469.6v8M412.8 466.9h8M416.8 462.9v8M427.9 461.8h8M431.9 457.8v8M417.8 472.7h8M421.8 468.7v8M437.1 474.4h8M441.1 470.4v8M459.0 582.5h8M463.0 578.5v8M421.2 621.1h8M425.2 617.1v8M400.2 636.2h8M404.2 632.2v8M414.5 653.9h8M418.5 649.9v8M438.0 648.0h8M442.0 644.0v8M441.3 648.0h8M445.3 644.0v8M461.5 646.3h8M465.5 642.3v8M474.1 650.5h8M478.1 646.5v8M490.9 661.4h8M494.9 657.4v8M495.1 662.3h8M499.1 658.3v8M482.5 700.0h8M486.5 696.0v8M404.4 717.7h8M408.4 713.7v8M416.1 731.9h8M420.1 727.9v8M433.8 729.4h8M437.8 725.4v8M454.8 728.6h8M458.8 724.6v8M511.0 622.8h8M515.0 618.8v8M257.8 725.0h8M261.8 721.0v8M316.6 727.6h8M320.6 723.6v8M346.0 736.8h8M350.0 732.8v8M390.5 724.2h8M394.5 720.2v8M415.7 731.8h8M419.7 727.8v8M433.3 729.2h8M437.3 725.2v8M454.3 727.6h8M458.3 723.6v8M389.6 751.1h8M393.6 747.1v8M446.7 753.6h8M450.7 749.6v8M414.8 781.3h8M418.8 777.3v8M427.4 786.3h8M431.4 782.3v8M252.0 748.5h8M256.0 744.5v8M280.5 749.4h8M284.5 745.4v8M273.8 762.0h8M277.8 758.0v8M239.4 782.1h8M243.4 778.1v8M278.8 787.2h8M282.8 783.2v8M294.8 789.7h8M298.8 785.7v8M308.2 793.0h8M312.2 789.0v8M260.3 795.6h8M264.3 791.6v8M310.7 806.5h8M314.7 802.5v8M330.9 808.1h8M334.9 804.1v8M337.6 814.9h8M341.6 810.9v8M345.1 819.1h8M349.1 815.1v8M355.2 835.8h8M359.2 831.8v8M363.6 840.9h8M367.6 836.9v8M373.7 845.1h8M377.7 841.1v8M382.1 847.6h8M386.1 843.6v8M389.6 848.4h8M393.6 844.4v8M400.5 848.4h8M404.5 844.4v8M415.7 848.4h8M419.7 844.4v8M424.0 852.6h8M428.0 848.6v8M440.0 854.3h8M444.0 850.3v8M267.1 848.4h8M271.1 844.4v8M256.1 875.3h8M260.1 871.3v8M440.0 862.7h8M444.0 858.7v8M254.5 875.3h8M258.5 871.3v8M380.4 892.9h8M384.4 888.9v8M386.3 890.4h8M390.3 886.4v8M388.8 897.9h8M392.8 893.9v8M134.6 533.7h8M138.6 529.7v8M158.5 568.9h8M162.5 564.9v8M177.4 600.8h8M181.4 596.8v8M345.3 587.4h8M349.3 583.4v8M351.2 586.5h8M355.2 582.5v8M373.9 588.7h8M377.9 584.7v8M352.9 618.4h8M356.9 614.4v8M345.3 634.1h8M349.3 630.1v8M328.5 628.5h8M332.5 624.5v8M409.6 516.0h8M413.6 512.0v8M400.7 637.4h8M404.7 633.4v8M354.6 657.9h8M358.6 653.9v8M212.7 682.0h8M216.7 678.0v8M163.2 718.1h8M167.2 714.1v8M167.4 722.3h8M171.4 718.3v8M205.1 708.8h8M209.1 704.8v8M174.9 755.0h8M178.9 751.0v8M178.3 757.5h8M182.3 753.5v8M188.3 757.5h8M192.3 753.5v8M200.1 757.5h8M204.1 753.5v8M203.5 760.0h8M207.5 756.0v8M230.3 740.7h8M234.3 736.7v8M247.9 746.6h8M251.9 742.6v8M251.3 749.1h8M255.3 745.1v8M143.9 755.8h8M147.9 751.8v8M148.0 758.4h8M152.0 754.4v8M127.1 789.4h8M131.1 785.4v8M141.3 792.8h8M145.3 788.8v8M157.3 786.1h8M161.3 782.1v8M160.6 788.6h8M164.6 784.6v8M210.2 794.5h8M214.2 790.5v8M214.4 797.8h8M218.4 793.8v8M183.3 796.1h8M187.3 792.1v8M235.4 779.4h8M239.4 775.4v8M238.7 782.7h8M242.7 778.7v8M257.2 792.8h8M261.2 788.8v8M260.5 796.1h8M264.5 792.1v8M149.7 806.2h8M153.7 802.2v8M258.0 724.8h8M262.0 720.8v8M305.9 694.6h8M309.9 690.6v8M328.5 697.1h8M332.5 693.1v8M317.6 727.3h8M321.6 723.3v8M346.2 737.4h8M350.2 733.4v8M354.6 659.3h8M358.6 655.3v8M388.1 713.0h8M392.1 709.0v8M391.5 723.9h8M395.5 719.9v8M404.9 717.2h8M408.9 713.2v8M389.8 751.7h8M393.8 747.7v8M413.3 781.0h8M417.3 777.0v8M149.7 806.0h8M153.7 802.0v8M176.6 818.5h8M180.6 814.5v8M193.4 832.8h8M197.4 828.8v8M215.2 847.9h8M219.2 843.9v8M224.4 819.4h8M228.4 815.4v8M211.8 796.7h8M215.8 792.7v8M183.3 796.7h8M187.3 792.7v8M142.2 793.4h8M146.2 789.4v8M127.1 791.7h8M131.1 787.7v8"/></g>
<g class="lb">
<text x="669.5" y="328.2" textLength="31.5" lengthAdjust="spacingAndGlyphs">856</text>
<text x="626.7" y="373.9" textLength="31.5" lengthAdjust="spacingAndGlyphs">862</text>
<text x="536.8" y="391.5" textLength="31.5" lengthAdjust="spacingAndGlyphs">864</text>
<text x="486.5" y="418.4" textLength="31.5" lengthAdjust="spacingAndGlyphs">866</text>
<text x="595.6" y="425.9" textLength="31.5" lengthAdjust="spacingAndGlyphs">862</text>
<text x="475.6" y="457.0" textLength="75.3" lengthAdjust="spacingAndGlyphs">FF 864.0</text>
<text x="409.2" y="458.7" textLength="31.5" lengthAdjust="spacingAndGlyphs">868</text>
<text x="591.4" y="474.6" textLength="31.5" lengthAdjust="spacingAndGlyphs">860</text>
<text x="524.2" y="491.7" textLength="31.5" lengthAdjust="spacingAndGlyphs">860</text>
<text x="415.1" y="511.9" textLength="75.3" lengthAdjust="spacingAndGlyphs">FF 862.0</text>
<text x="494.0" y="524.8" textLength="31.5" lengthAdjust="spacingAndGlyphs">858</text>
<text x="580.5" y="518.1" textLength="31.5" lengthAdjust="spacingAndGlyphs">858</text>
<text x="546.1" y="532.3" textLength="31.5" lengthAdjust="spacingAndGlyphs">856</text>
<text x="425.2" y="562.2" textLength="31.5" lengthAdjust="spacingAndGlyphs">860</text>
<text x="464.6" y="579.4" textLength="75.3" lengthAdjust="spacingAndGlyphs">FF 860.0</text>
<text x="426.9" y="616.1" textLength="31.5" lengthAdjust="spacingAndGlyphs">860</text>
<text x="518.4" y="617.8" textLength="31.5" lengthAdjust="spacingAndGlyphs">848</text>
<text x="447.0" y="645.1" textLength="63.1" lengthAdjust="spacingAndGlyphs">852844</text>
<text x="410.9" y="714.3" textLength="31.5" lengthAdjust="spacingAndGlyphs">862</text>
<text x="491.5" y="697.5" textLength="163.0" lengthAdjust="spacingAndGlyphs">TOP OF DAM 855</text>
<text x="256.8" y="743.5" textLength="57.8" lengthAdjust="spacingAndGlyphs">869.61</text>
<text x="245.0" y="777.9" textLength="57.8" lengthAdjust="spacingAndGlyphs">869.81</text>
<text x="262.7" y="870.3" textLength="57.8" lengthAdjust="spacingAndGlyphs">868.33</text>
<text x="316.4" y="801.4" textLength="31.5" lengthAdjust="spacingAndGlyphs">866</text>
<text x="360.0" y="831.7" textLength="31.5" lengthAdjust="spacingAndGlyphs">862</text>
<text x="396.1" y="843.4" textLength="31.5" lengthAdjust="spacingAndGlyphs">858</text>
<text x="431.4" y="848.4" textLength="31.5" lengthAdjust="spacingAndGlyphs">852</text>
<text x="391.1" y="883.7" textLength="31.5" lengthAdjust="spacingAndGlyphs">858</text>
<text x="395.3" y="746.9" textLength="75.3" lengthAdjust="spacingAndGlyphs">FF 866.0</text>
<text x="422.2" y="777.1" textLength="65.8" lengthAdjust="spacingAndGlyphs">SWALE</text>
<text x="428.0" y="898.8" textLength="31.5" lengthAdjust="spacingAndGlyphs">849</text>
<text x="139.5" y="529.5" textLength="31.5" lengthAdjust="spacingAndGlyphs">862</text>
<text x="163.8" y="564.7" textLength="31.5" lengthAdjust="spacingAndGlyphs">864</text>
<text x="183.1" y="597.5" textLength="31.5" lengthAdjust="spacingAndGlyphs">866</text>
<text x="351.0" y="583.2" textLength="31.5" lengthAdjust="spacingAndGlyphs">868</text>
<text x="359.4" y="614.2" textLength="31.5" lengthAdjust="spacingAndGlyphs">862</text>
<text x="360.2" y="653.7" textLength="75.3" lengthAdjust="spacingAndGlyphs">FF 864.0</text>
<text x="172.2" y="717.2" textLength="57.8" lengthAdjust="spacingAndGlyphs">870.88</text>
<text x="183.9" y="751.7" textLength="57.8" lengthAdjust="spacingAndGlyphs">871.56</text>
<text x="166.3" y="784.4" textLength="57.8" lengthAdjust="spacingAndGlyphs">871.58</text>
<text x="310.7" y="690.4" textLength="31.5" lengthAdjust="spacingAndGlyphs">870</text>
<text x="322.5" y="723.9" textLength="31.5" lengthAdjust="spacingAndGlyphs">867</text>
<text x="232.6" y="815.2" textLength="57.8" lengthAdjust="spacingAndGlyphs">869.71</text>
<text x="222.6" y="843.7" textLength="57.8" lengthAdjust="spacingAndGlyphs">869.05</text>
</g>
<g id="sheet">
<rect x="892.5" y="171.5" width="678.5" height="451.5" fill="#939393" stroke="#edb42c" stroke-width="1"/>
<rect x="901.6" y="181.4" width="657" height="433" fill="none" stroke="#161616" stroke-width="1.4"/>
<g filter="url(#sblur)">
<defs><filter id="sblur" x="-2%" y="-2%" width="104%" height="104%"><feGaussianBlur stdDeviation="0.45"/></filter>
<pattern id="hat" width="3" height="3" patternUnits="userSpaceOnUse"><path d="M0 3L3 0" stroke="#111" stroke-width="1.1"/></pattern>
<pattern id="dots" width="4" height="3.4" patternUnits="userSpaceOnUse"><rect x="0" y="0" width="1.2" height="1.2" fill="#222"/></pattern></defs>
<rect x="926" y="199.5" width="62" height="24" fill="none" stroke="#161616" stroke-width="1.2"/>
<circle cx="937" cy="210.500" r="5" fill="none" stroke="#161616" stroke-width="1.1"/><path d="M933.5 207l7 7" stroke="#161616" stroke-width="1.2"/>
<rect x="947" y="208" width="35" height="6" fill="#a2a2a2" stroke="#161616" stroke-width=".8"/>
<g font-family="Liberation Sans,sans-serif">
<text x="940.0" y="195.5" font-size="3.00" textLength="33.0" lengthAdjust="spacingAndGlyphs" fill="#0c0c0c" opacity="0.60" >CALL BEFORE YOU DIG</text>
<text x="931.0" y="205.5" font-size="2.80" textLength="52.0" lengthAdjust="spacingAndGlyphs" fill="#0c0c0c" opacity="0.60" >PALMETTO UTILITY PROTECTION</text>
<text x="949.0" y="212.6" font-size="3.20" textLength="31.0" lengthAdjust="spacingAndGlyphs" fill="#0c0c0c" opacity="0.75" >1-888-721-7877</text>
<text x="930.0" y="221.5" font-size="2.60" textLength="55.0" lengthAdjust="spacingAndGlyphs" fill="#0c0c0c" opacity="0.70" >3 DAYS BEFORE DIGGING IN SOUTH CAROLINA</text>
<text x="919.0" y="231.0" font-size="4.20" textLength="82.0" lengthAdjust="spacingAndGlyphs" font-weight="bold" fill="#0c0c0c" opacity="0.85" >ALL IMPROVEMENTS SHALL BE IN ACCORDANCE</text>
<text x="921.0" y="235.0" font-size="2.70" textLength="78.0" lengthAdjust="spacingAndGlyphs" fill="#0c0c0c" opacity="0.65" >with the current standards and specifications of the county</text>
<text x="921.0" y="238.0" font-size="2.70" textLength="78.0" lengthAdjust="spacingAndGlyphs" fill="#0c0c0c" opacity="0.65" >and state department of transportation unless otherwise noted</text>
<text x="918.0" y="241.0" font-size="2.70" textLength="82.0" lengthAdjust="spacingAndGlyphs" fill="#0c0c0c" opacity="0.65" >contractor shall verify all utilities prior to construction on site</text>
<rect x="906" y="241.5" width="212" height="244.5" fill="#979797" opacity=".55"/>
<text x="1011.0" y="246.3" font-size="3.90" text-anchor="middle" textLength="80.0" lengthAdjust="spacingAndGlyphs" font-weight="bold" fill="#0c0c0c" opacity="0.90" >STORMWATER STRUCTURE SCHEDULE</text>
<text x="918.0" y="250.0" font-size="3.30" text-anchor="middle" fill="#0c0c0c" opacity="0.70" >Structure</text>
<text x="918.0" y="254.0" font-size="3.30" text-anchor="middle" fill="#0c0c0c" opacity="0.70" >Number</text>
<text x="945.0" y="254.0" font-size="3.30" text-anchor="middle" fill="#0c0c0c" opacity="0.70" >Structure</text>
<text x="976.0" y="254.0" font-size="3.30" text-anchor="middle" fill="#0c0c0c" opacity="0.70" >Type</text>
<text x="1010.0" y="250.0" font-size="3.30" text-anchor="middle" fill="#0c0c0c" opacity="0.70" >Rim</text>
<text x="1010.0" y="254.0" font-size="3.30" text-anchor="middle" fill="#0c0c0c" opacity="0.70" >Elevation</text>
<text x="1044.0" y="250.0" font-size="3.30" text-anchor="middle" fill="#0c0c0c" opacity="0.70" >Inv.</text>
<text x="1044.0" y="254.0" font-size="3.30" text-anchor="middle" fill="#0c0c0c" opacity="0.70" >Elevation</text>
<text x="1082.0" y="250.0" font-size="3.30" text-anchor="middle" fill="#0c0c0c" opacity="0.70" >Pipe</text>
<text x="1082.0" y="254.0" font-size="3.30" text-anchor="middle" fill="#0c0c0c" opacity="0.70" >Elevation</text>
<text x="1110.0" y="250.0" font-size="3.30" text-anchor="middle" fill="#0c0c0c" opacity="0.70" >Invert</text>
<text x="1110.0" y="254.0" font-size="3.30" text-anchor="middle" fill="#0c0c0c" opacity="0.70" >(ft)</text>
<path d="M906 256.2H1118M906 268.3H1118M906 280.3H1118M906 292.4H1118M906 304.4H1118M906 310.5H1118M906 322.5H1118M906 334.6H1118M906 346.6H1118M906 358.7H1118M906 370.8H1118M906 382.8H1118M906 394.9H1118M906 406.9H1118M906 419.0H1118M906 431.1H1118M906 443.1H1118M906 455.2H1118M906 467.2H1118M906 479.3H1118" stroke="#161616" stroke-width="1.25" fill="none"/>
<path d="M906 262.2H1118M906 274.3H1118M906 286.3H1118M906 298.4H1118M906 316.5H1118M906 328.6H1118M906 340.6H1118M906 352.7H1118M906 364.7H1118M906 376.8H1118M906 388.9H1118M906 400.9H1118M906 413.0H1118M906 425.0H1118M906 437.1H1118M906 449.2H1118M906 461.2H1118M906 473.3H1118M906 485.3H1118" stroke="#4a4a4a" stroke-width=".7" fill="none"/>
<path d="M992.5 249V256.2M1061 249V256.2M992.5 256.2v6.0M992.5 268.3v6.0M992.5 280.3v6.0M992.5 292.4v6.0M992.5 310.5v6.0M992.5 322.5v6.0M992.5 334.6v6.0M992.5 346.6v6.0M992.5 358.7v6.0M992.5 370.8v6.0M992.5 382.8v6.0M992.5 394.9v6.0M992.5 406.9v6.0M992.5 419.0v6.0M992.5 431.1v6.0M992.5 443.1v6.0M992.5 455.2v6.0M992.5 467.2v6.0M992.5 479.3v6.0" stroke="#161616" stroke-width="1" fill="none"/>
<g opacity=".72">
<text x="917.0" y="260.8" font-size="3.40" text-anchor="middle" font-weight="bold" fill="#0c0c0c" opacity="0.85" >1</text>
<text x="944.0" y="260.8" font-size="3.30" text-anchor="middle" fill="#0c0c0c" opacity="0.60" >n/a</text>
<text x="976.0" y="260.8" font-size="3.30" text-anchor="middle" fill="#0c0c0c" opacity="0.70" >yard</text>
<text x="1009.0" y="260.8" font-size="3.30" text-anchor="middle" fill="#0c0c0c" opacity="0.70" >—</text>
<text x="1044.0" y="260.8" font-size="3.30" text-anchor="middle" fill="#0c0c0c" opacity="0.80" >846.37</text>
<text x="1082.0" y="260.8" font-size="3.30" text-anchor="middle" fill="#0c0c0c" opacity="0.80" >845.53</text>
<text x="1110.0" y="260.8" font-size="3.30" text-anchor="middle" fill="#0c0c0c" opacity="0.60" >3.1</text>
<text x="907.0" y="266.8" font-size="3.30" textLength="20.0" lengthAdjust="spacingAndGlyphs" fill="#0c0c0c" opacity="0.75" >Outfall 1 - 2</text>
<text x="942.0" y="266.8" font-size="3.30" textLength="24.0" lengthAdjust="spacingAndGlyphs" fill="#0c0c0c" opacity="0.70" >Structure 51B</text>
<text x="983.0" y="266.8" font-size="3.30" textLength="18.0" lengthAdjust="spacingAndGlyphs" fill="#0c0c0c" opacity="0.70" >Type 16x16</text>
<text x="1032.0" y="266.8" font-size="3.30" textLength="14.0" lengthAdjust="spacingAndGlyphs" fill="#0c0c0c" opacity="0.70" >Inv. 42'</text>
<text x="1064.0" y="266.8" font-size="3.30" textLength="33.0" lengthAdjust="spacingAndGlyphs" fill="#0c0c0c" opacity="0.75" >Downstream IE. 842.2</text>
<text x="917.0" y="272.9" font-size="3.40" text-anchor="middle" font-weight="bold" fill="#0c0c0c" opacity="0.85" >2</text>
<text x="944.0" y="272.9" font-size="3.30" text-anchor="middle" fill="#0c0c0c" opacity="0.60" >n/a</text>
<text x="976.0" y="272.9" font-size="3.30" text-anchor="middle" fill="#0c0c0c" opacity="0.70" >yard</text>
<text x="1009.0" y="272.9" font-size="3.30" text-anchor="middle" fill="#0c0c0c" opacity="0.60" >852.2</text>
<text x="1044.0" y="272.9" font-size="3.30" text-anchor="middle" fill="#0c0c0c" opacity="0.80" >847.74</text>
<text x="1082.0" y="272.9" font-size="3.30" text-anchor="middle" fill="#0c0c0c" opacity="0.80" >846.06</text>
<text x="1110.0" y="272.9" font-size="3.30" text-anchor="middle" fill="#0c0c0c" opacity="0.60" >4.2</text>
<text x="907.0" y="278.9" font-size="3.30" textLength="20.0" lengthAdjust="spacingAndGlyphs" fill="#0c0c0c" opacity="0.75" >Outfall 2 - 3</text>
<text x="942.0" y="278.9" font-size="3.30" textLength="24.0" lengthAdjust="spacingAndGlyphs" fill="#0c0c0c" opacity="0.70" >Structure 61B</text>
<text x="983.0" y="278.9" font-size="3.30" textLength="18.0" lengthAdjust="spacingAndGlyphs" fill="#0c0c0c" opacity="0.70" >Type 16x16</text>
<text x="1032.0" y="278.9" font-size="3.30" textLength="14.0" lengthAdjust="spacingAndGlyphs" fill="#0c0c0c" opacity="0.70" >Inv. 43'</text>
<text x="1064.0" y="278.9" font-size="3.30" textLength="33.0" lengthAdjust="spacingAndGlyphs" fill="#0c0c0c" opacity="0.75" >Downstream IE. 843.3</text>
<text x="917.0" y="284.9" font-size="3.40" text-anchor="middle" font-weight="bold" fill="#0c0c0c" opacity="0.85" >3</text>
<text x="944.0" y="284.9" font-size="3.30" text-anchor="middle" fill="#0c0c0c" opacity="0.60" >n/a</text>
<text x="976.0" y="284.9" font-size="3.30" text-anchor="middle" fill="#0c0c0c" opacity="0.70" >yard</text>
<text x="1009.0" y="284.9" font-size="3.30" text-anchor="middle" fill="#0c0c0c" opacity="0.60" >853.3</text>
<text x="1044.0" y="284.9" font-size="3.30" text-anchor="middle" fill="#0c0c0c" opacity="0.80" >847.11</text>
<text x="1082.0" y="284.9" font-size="3.30" text-anchor="middle" fill="#0c0c0c" opacity="0.80" >846.59</text>
<text x="1110.0" y="284.9" font-size="3.30" text-anchor="middle" fill="#0c0c0c" opacity="0.60" >2.3</text>
<text x="907.0" y="290.9" font-size="3.30" textLength="20.0" lengthAdjust="spacingAndGlyphs" fill="#0c0c0c" opacity="0.75" >Outfall 3 - 4</text>
<text x="942.0" y="290.9" font-size="3.30" textLength="24.0" lengthAdjust="spacingAndGlyphs" fill="#0c0c0c" opacity="0.70" >Structure 71B</text>
<text x="983.0" y="290.9" font-size="3.30" textLength="18.0" lengthAdjust="spacingAndGlyphs" fill="#0c0c0c" opacity="0.70" >Type 16x16</text>
<text x="1032.0" y="290.9" font-size="3.30" textLength="14.0" lengthAdjust="spacingAndGlyphs" fill="#0c0c0c" opacity="0.70" >Inv. 44'</text>
<text x="1064.0" y="290.9" font-size="3.30" textLength="33.0" lengthAdjust="spacingAndGlyphs" fill="#0c0c0c" opacity="0.75" >Downstream IE. 844.4</text>
<text x="917.0" y="297.0" font-size="3.40" text-anchor="middle" font-weight="bold" fill="#0c0c0c" opacity="0.85" >4</text>
<text x="944.0" y="297.0" font-size="3.30" text-anchor="middle" fill="#0c0c0c" opacity="0.60" >n/a</text>
<text x="976.0" y="297.0" font-size="3.30" text-anchor="middle" fill="#0c0c0c" opacity="0.70" >yard</text>
<text x="1009.0" y="297.0" font-size="3.30" text-anchor="middle" fill="#0c0c0c" opacity="0.70" >—</text>
<text x="1044.0" y="297.0" font-size="3.30" text-anchor="middle" fill="#0c0c0c" opacity="0.80" >848.48</text>
<text x="1082.0" y="297.0" font-size="3.30" text-anchor="middle" fill="#0c0c0c" opacity="0.80" >847.12</text>
<text x="1110.0" y="297.0" font-size="3.30" text-anchor="middle" fill="#0c0c0c" opacity="0.60" >3.4</text>
<text x="907.0" y="303.0" font-size="3.30" textLength="20.0" lengthAdjust="spacingAndGlyphs" fill="#0c0c0c" opacity="0.75" >Outfall 4 - 5</text>
<text x="942.0" y="303.0" font-size="3.30" textLength="24.0" lengthAdjust="spacingAndGlyphs" fill="#0c0c0c" opacity="0.70" >Structure 81B</text>
<text x="983.0" y="303.0" font-size="3.30" textLength="18.0" lengthAdjust="spacingAndGlyphs" fill="#0c0c0c" opacity="0.70" >Type 16x16</text>
<text x="1032.0" y="303.0" font-size="3.30" textLength="14.0" lengthAdjust="spacingAndGlyphs" fill="#0c0c0c" opacity="0.70" >Inv. 45'</text>
<text x="1064.0" y="303.0" font-size="3.30" textLength="33.0" lengthAdjust="spacingAndGlyphs" fill="#0c0c0c" opacity="0.75" >Downstream IE. 845.5</text>
<text x="917.0" y="309.0" font-size="3.40" text-anchor="middle" font-weight="bold" fill="#0c0c0c" opacity="0.85" >5</text>
<text x="944.0" y="309.0" font-size="3.30" text-anchor="middle" fill="#0c0c0c" opacity="0.60" >n/a</text>
<text x="976.0" y="309.0" font-size="3.30" text-anchor="middle" fill="#0c0c0c" opacity="0.70" >yard</text>
<text x="1009.0" y="309.0" font-size="3.30" text-anchor="middle" fill="#0c0c0c" opacity="0.60" >855.5</text>
<text x="1044.0" y="309.0" font-size="3.30" text-anchor="middle" fill="#0c0c0c" opacity="0.80" >848.85</text>
<text x="1082.0" y="309.0" font-size="3.30" text-anchor="middle" fill="#0c0c0c" opacity="0.80" >847.65</text>
<text x="1110.0" y="309.0" font-size="3.30" text-anchor="middle" fill="#0c0c0c" opacity="0.60" >4.5</text>
<text x="917.0" y="315.1" font-size="3.40" text-anchor="middle" font-weight="bold" fill="#0c0c0c" opacity="0.85" >6</text>
<text x="944.0" y="315.1" font-size="3.30" text-anchor="middle" fill="#0c0c0c" opacity="0.60" >n/a</text>
<text x="976.0" y="315.1" font-size="3.30" text-anchor="middle" fill="#0c0c0c" opacity="0.70" >yard</text>
<text x="1009.0" y="315.1" font-size="3.30" text-anchor="middle" fill="#0c0c0c" opacity="0.60" >856.6</text>
<text x="1044.0" y="315.1" font-size="3.30" text-anchor="middle" fill="#0c0c0c" opacity="0.80" >849.22</text>
<text x="1082.0" y="315.1" font-size="3.30" text-anchor="middle" fill="#0c0c0c" opacity="0.80" >848.18</text>
<text x="1110.0" y="315.1" font-size="3.30" text-anchor="middle" fill="#0c0c0c" opacity="0.60" >2.6</text>
<text x="907.0" y="321.1" font-size="3.30" textLength="20.0" lengthAdjust="spacingAndGlyphs" fill="#0c0c0c" opacity="0.75" >Outfall 6 - 7</text>
<text x="942.0" y="321.1" font-size="3.30" textLength="24.0" lengthAdjust="spacingAndGlyphs" fill="#0c0c0c" opacity="0.70" >Structure 101B</text>
<text x="983.0" y="321.1" font-size="3.30" textLength="18.0" lengthAdjust="spacingAndGlyphs" fill="#0c0c0c" opacity="0.70" >Type 16x16</text>
<text x="1032.0" y="321.1" font-size="3.30" textLength="14.0" lengthAdjust="spacingAndGlyphs" fill="#0c0c0c" opacity="0.70" >Inv. 47'</text>
<text x="1064.0" y="321.1" font-size="3.30" textLength="33.0" lengthAdjust="spacingAndGlyphs" fill="#0c0c0c" opacity="0.75" >Downstream IE. 847.7</text>
<text x="917.0" y="327.1" font-size="3.40" text-anchor="middle" font-weight="bold" fill="#0c0c0c" opacity="0.85" >7</text>
<text x="944.0" y="327.1" font-size="3.30" text-anchor="middle" fill="#0c0c0c" opacity="0.60" >n/a</text>
<text x="976.0" y="327.1" font-size="3.30" text-anchor="middle" fill="#0c0c0c" opacity="0.70" >yard</text>
<text x="1009.0" y="327.1" font-size="3.30" text-anchor="middle" fill="#0c0c0c" opacity="0.70" >—</text>
<text x="1044.0" y="327.1" font-size="3.30" text-anchor="middle" fill="#0c0c0c" opacity="0.80" >849.59</text>
<text x="1082.0" y="327.1" font-size="3.30" text-anchor="middle" fill="#0c0c0c" opacity="0.80" >848.71</text>
<text x="1110.0" y="327.1" font-size="3.30" text-anchor="middle" fill="#0c0c0c" opacity="0.60" >3.7</text>
<text x="907.0" y="333.2" font-size="3.30" textLength="20.0" lengthAdjust="spacingAndGlyphs" fill="#0c0c0c" opacity="0.75" >Outfall 7 - 8</text>
<text x="942.0" y="333.2" font-size="3.30" textLength="24.0" lengthAdjust="spacingAndGlyphs" fill="#0c0c0c" opacity="0.70" >Structure 111B</text>
<text x="983.0" y="333.2" font-size="3.30" textLength="18.0" lengthAdjust="spacingAndGlyphs" fill="#0c0c0c" opacity="0.70" >Type 16x16</text>
<text x="1032.0" y="333.2" font-size="3.30" textLength="14.0" lengthAdjust="spacingAndGlyphs" fill="#0c0c0c" opacity="0.70" >Inv. 48'</text>
<text x="1064.0" y="333.2" font-size="3.30" textLength="33.0" lengthAdjust="spacingAndGlyphs" fill="#0c0c0c" opacity="0.75" >Downstream IE. 848.8</text>
<text x="917.0" y="339.2" font-size="3.40" text-anchor="middle" font-weight="bold" fill="#0c0c0c" opacity="0.85" >8</text>
<text x="944.0" y="339.2" font-size="3.30" text-anchor="middle" fill="#0c0c0c" opacity="0.60" >n/a</text>
<text x="976.0" y="339.2" font-size="3.30" text-anchor="middle" fill="#0c0c0c" opacity="0.70" >yard</text>
<text x="1009.0" y="339.2" font-size="3.30" text-anchor="middle" fill="#0c0c0c" opacity="0.60" >858.8</text>
<text x="1044.0" y="339.2" font-size="3.30" text-anchor="middle" fill="#0c0c0c" opacity="0.80" >850.96</text>
<text x="1082.0" y="339.2" font-size="3.30" text-anchor="middle" fill="#0c0c0c" opacity="0.80" >849.24</text>
<text x="1110.0" y="339.2" font-size="3.30" text-anchor="middle" fill="#0c0c0c" opacity="0.60" >4.8</text>
<text x="907.0" y="345.2" font-size="3.30" textLength="20.0" lengthAdjust="spacingAndGlyphs" fill="#0c0c0c" opacity="0.75" >Outfall 8 - 9</text>
<text x="942.0" y="345.2" font-size="3.30" textLength="24.0" lengthAdjust="spacingAndGlyphs" fill="#0c0c0c" opacity="0.70" >Structure 121B</text>
<text x="983.0" y="345.2" font-size="3.30" textLength="18.0" lengthAdjust="spacingAndGlyphs" fill="#0c0c0c" opacity="0.70" >Type 16x16</text>
<text x="1032.0" y="345.2" font-size="3.30" textLength="14.0" lengthAdjust="spacingAndGlyphs" fill="#0c0c0c" opacity="0.70" >Inv. 49'</text>
<text x="1064.0" y="345.2" font-size="3.30" textLength="33.0" lengthAdjust="spacingAndGlyphs" fill="#0c0c0c" opacity="0.75" >Downstream IE. 849.9</text>
<text x="917.0" y="351.2" font-size="3.40" text-anchor="middle" font-weight="bold" fill="#0c0c0c" opacity="0.85" >9</text>
<text x="944.0" y="351.2" font-size="3.30" text-anchor="middle" fill="#0c0c0c" opacity="0.60" >n/a</text>
<text x="976.0" y="351.2" font-size="3.30" text-anchor="middle" fill="#0c0c0c" opacity="0.70" >yard</text>
<text x="1009.0" y="351.2" font-size="3.30" text-anchor="middle" fill="#0c0c0c" opacity="0.60" >859.9</text>
<text x="1044.0" y="351.2" font-size="3.30" text-anchor="middle" fill="#0c0c0c" opacity="0.80" >850.33</text>
<text x="1082.0" y="351.2" font-size="3.30" text-anchor="middle" fill="#0c0c0c" opacity="0.80" >849.77</text>
<text x="1110.0" y="351.2" font-size="3.30" text-anchor="middle" fill="#0c0c0c" opacity="0.60" >2.9</text>
<text x="907.0" y="357.3" font-size="3.30" textLength="20.0" lengthAdjust="spacingAndGlyphs" fill="#0c0c0c" opacity="0.75" >Outfall 9 - 10</text>
<text x="942.0" y="357.3" font-size="3.30" textLength="24.0" lengthAdjust="spacingAndGlyphs" fill="#0c0c0c" opacity="0.70" >Structure 131B</text>
<text x="983.0" y="357.3" font-size="3.30" textLength="18.0" lengthAdjust="spacingAndGlyphs" fill="#0c0c0c" opacity="0.70" >Type 16x16</text>
<text x="1032.0" y="357.3" font-size="3.30" textLength="14.0" lengthAdjust="spacingAndGlyphs" fill="#0c0c0c" opacity="0.70" >Inv. 50'</text>
<text x="1064.0" y="357.3" font-size="3.30" textLength="33.0" lengthAdjust="spacingAndGlyphs" fill="#0c0c0c" opacity="0.75" >Downstream IE. 850.0</text>
<text x="917.0" y="363.3" font-size="3.40" text-anchor="middle" font-weight="bold" fill="#0c0c0c" opacity="0.85" >10</text>
<text x="944.0" y="363.3" font-size="3.30" text-anchor="middle" fill="#0c0c0c" opacity="0.60" >n/a</text>
<text x="976.0" y="363.3" font-size="3.30" text-anchor="middle" fill="#0c0c0c" opacity="0.70" >yard</text>
<text x="1009.0" y="363.3" font-size="3.30" text-anchor="middle" fill="#0c0c0c" opacity="0.70" >—</text>
<text x="1044.0" y="363.3" font-size="3.30" text-anchor="middle" fill="#0c0c0c" opacity="0.80" >851.70</text>
<text x="1082.0" y="363.3" font-size="3.30" text-anchor="middle" fill="#0c0c0c" opacity="0.80" >850.30</text>
<text x="1110.0" y="363.3" font-size="3.30" text-anchor="middle" fill="#0c0c0c" opacity="0.60" >3.0</text>
<text x="907.0" y="369.3" font-size="3.30" textLength="20.0" lengthAdjust="spacingAndGlyphs" fill="#0c0c0c" opacity="0.75" >Outfall 10 - 11</text>
<text x="942.0" y="369.3" font-size="3.30" textLength="24.0" lengthAdjust="spacingAndGlyphs" fill="#0c0c0c" opacity="0.70" >Structure 141B</text>
<text x="983.0" y="369.3" font-size="3.30" textLength="18.0" lengthAdjust="spacingAndGlyphs" fill="#0c0c0c" opacity="0.70" >Type 16x16</text>
<text x="1032.0" y="369.3" font-size="3.30" textLength="14.0" lengthAdjust="spacingAndGlyphs" fill="#0c0c0c" opacity="0.70" >Inv. 51'</text>
<text x="1064.0" y="369.3" font-size="3.30" textLength="33.0" lengthAdjust="spacingAndGlyphs" fill="#0c0c0c" opacity="0.75" >Downstream IE. 851.1</text>
<text x="917.0" y="375.4" font-size="3.40" text-anchor="middle" font-weight="bold" fill="#0c0c0c" opacity="0.85" >11</text>
<text x="944.0" y="375.4" font-size="3.30" text-anchor="middle" fill="#0c0c0c" opacity="0.60" >n/a</text>
<text x="976.0" y="375.4" font-size="3.30" text-anchor="middle" fill="#0c0c0c" opacity="0.70" >yard</text>
<text x="1009.0" y="375.4" font-size="3.30" text-anchor="middle" fill="#0c0c0c" opacity="0.60" >861.1</text>
<text x="1044.0" y="375.4" font-size="3.30" text-anchor="middle" fill="#0c0c0c" opacity="0.80" >851.07</text>
<text x="1082.0" y="375.4" font-size="3.30" text-anchor="middle" fill="#0c0c0c" opacity="0.80" >850.83</text>
<text x="1110.0" y="375.4" font-size="3.30" text-anchor="middle" fill="#0c0c0c" opacity="0.60" >4.1</text>
<text x="907.0" y="381.4" font-size="3.30" textLength="20.0" lengthAdjust="spacingAndGlyphs" fill="#0c0c0c" opacity="0.75" >Outfall 11 - 12</text>
<text x="942.0" y="381.4" font-size="3.30" textLength="24.0" lengthAdjust="spacingAndGlyphs" fill="#0c0c0c" opacity="0.70" >Structure 151B</text>
<text x="983.0" y="381.4" font-size="3.30" textLength="18.0" lengthAdjust="spacingAndGlyphs" fill="#0c0c0c" opacity="0.70" >Type 16x16</text>
<text x="1032.0" y="381.4" font-size="3.30" textLength="14.0" lengthAdjust="spacingAndGlyphs" fill="#0c0c0c" opacity="0.70" >Inv. 52'</text>
<text x="1064.0" y="381.4" font-size="3.30" textLength="33.0" lengthAdjust="spacingAndGlyphs" fill="#0c0c0c" opacity="0.75" >Downstream IE. 852.2</text>
<text x="917.0" y="387.4" font-size="3.40" text-anchor="middle" font-weight="bold" fill="#0c0c0c" opacity="0.85" >12</text>
<text x="944.0" y="387.4" font-size="3.30" text-anchor="middle" fill="#0c0c0c" opacity="0.60" >n/a</text>
<text x="976.0" y="387.4" font-size="3.30" text-anchor="middle" fill="#0c0c0c" opacity="0.70" >yard</text>
<text x="1009.0" y="387.4" font-size="3.30" text-anchor="middle" fill="#0c0c0c" opacity="0.60" >862.2</text>
<text x="1044.0" y="387.4" font-size="3.30" text-anchor="middle" fill="#0c0c0c" opacity="0.80" >852.44</text>
<text x="1082.0" y="387.4" font-size="3.30" text-anchor="middle" fill="#0c0c0c" opacity="0.80" >851.36</text>
<text x="1110.0" y="387.4" font-size="3.30" text-anchor="middle" fill="#0c0c0c" opacity="0.60" >2.2</text>
<text x="907.0" y="393.5" font-size="3.30" textLength="20.0" lengthAdjust="spacingAndGlyphs" fill="#0c0c0c" opacity="0.75" >Outfall 12 - 13</text>
<text x="942.0" y="393.5" font-size="3.30" textLength="24.0" lengthAdjust="spacingAndGlyphs" fill="#0c0c0c" opacity="0.70" >Structure 161B</text>
<text x="983.0" y="393.5" font-size="3.30" textLength="18.0" lengthAdjust="spacingAndGlyphs" fill="#0c0c0c" opacity="0.70" >Type 16x16</text>
<text x="1032.0" y="393.5" font-size="3.30" textLength="14.0" lengthAdjust="spacingAndGlyphs" fill="#0c0c0c" opacity="0.70" >Inv. 53'</text>
<text x="1064.0" y="393.5" font-size="3.30" textLength="33.0" lengthAdjust="spacingAndGlyphs" fill="#0c0c0c" opacity="0.75" >Downstream IE. 853.3</text>
<text x="917.0" y="399.5" font-size="3.40" text-anchor="middle" font-weight="bold" fill="#0c0c0c" opacity="0.85" >13</text>
<text x="944.0" y="399.5" font-size="3.30" text-anchor="middle" fill="#0c0c0c" opacity="0.60" >n/a</text>
<text x="976.0" y="399.5" font-size="3.30" text-anchor="middle" fill="#0c0c0c" opacity="0.70" >yard</text>
<text x="1009.0" y="399.5" font-size="3.30" text-anchor="middle" fill="#0c0c0c" opacity="0.70" >—</text>
<text x="1044.0" y="399.5" font-size="3.30" text-anchor="middle" fill="#0c0c0c" opacity="0.80" >852.81</text>
<text x="1082.0" y="399.5" font-size="3.30" text-anchor="middle" fill="#0c0c0c" opacity="0.80" >851.89</text>
<text x="1110.0" y="399.5" font-size="3.30" text-anchor="middle" fill="#0c0c0c" opacity="0.60" >3.3</text>
<text x="907.0" y="405.5" font-size="3.30" textLength="20.0" lengthAdjust="spacingAndGlyphs" fill="#0c0c0c" opacity="0.75" >Outfall 13 - 14</text>
<text x="942.0" y="405.5" font-size="3.30" textLength="24.0" lengthAdjust="spacingAndGlyphs" fill="#0c0c0c" opacity="0.70" >Structure 171B</text>
<text x="983.0" y="405.5" font-size="3.30" textLength="18.0" lengthAdjust="spacingAndGlyphs" fill="#0c0c0c" opacity="0.70" >Type 16x16</text>
<text x="1032.0" y="405.5" font-size="3.30" textLength="14.0" lengthAdjust="spacingAndGlyphs" fill="#0c0c0c" opacity="0.70" >Inv. 54'</text>
<text x="1064.0" y="405.5" font-size="3.30" textLength="33.0" lengthAdjust="spacingAndGlyphs" fill="#0c0c0c" opacity="0.75" >Downstream IE. 854.4</text>
<text x="917.0" y="411.6" font-size="3.40" text-anchor="middle" font-weight="bold" fill="#0c0c0c" opacity="0.85" >14</text>
<text x="944.0" y="411.6" font-size="3.30" text-anchor="middle" fill="#0c0c0c" opacity="0.60" >n/a</text>
<text x="976.0" y="411.6" font-size="3.30" text-anchor="middle" fill="#0c0c0c" opacity="0.70" >yard</text>
<text x="1009.0" y="411.6" font-size="3.30" text-anchor="middle" fill="#0c0c0c" opacity="0.60" >864.4</text>
<text x="1044.0" y="411.6" font-size="3.30" text-anchor="middle" fill="#0c0c0c" opacity="0.80" >853.18</text>
<text x="1082.0" y="411.6" font-size="3.30" text-anchor="middle" fill="#0c0c0c" opacity="0.80" >852.42</text>
<text x="1110.0" y="411.6" font-size="3.30" text-anchor="middle" fill="#0c0c0c" opacity="0.60" >4.4</text>
<text x="907.0" y="417.6" font-size="3.30" textLength="20.0" lengthAdjust="spacingAndGlyphs" fill="#0c0c0c" opacity="0.75" >Outfall 14 - 15</text>
<text x="942.0" y="417.6" font-size="3.30" textLength="24.0" lengthAdjust="spacingAndGlyphs" fill="#0c0c0c" opacity="0.70" >Structure 181B</text>
<text x="983.0" y="417.6" font-size="3.30" textLength="18.0" lengthAdjust="spacingAndGlyphs" fill="#0c0c0c" opacity="0.70" >Type 16x16</text>
<text x="1032.0" y="417.6" font-size="3.30" textLength="14.0" lengthAdjust="spacingAndGlyphs" fill="#0c0c0c" opacity="0.70" >Inv. 55'</text>
<text x="1064.0" y="417.6" font-size="3.30" textLength="33.0" lengthAdjust="spacingAndGlyphs" fill="#0c0c0c" opacity="0.75" >Downstream IE. 855.5</text>
<text x="917.0" y="423.6" font-size="3.40" text-anchor="middle" font-weight="bold" fill="#0c0c0c" opacity="0.85" >15</text>
<text x="944.0" y="423.6" font-size="3.30" text-anchor="middle" fill="#0c0c0c" opacity="0.60" >n/a</text>
<text x="976.0" y="423.6" font-size="3.30" text-anchor="middle" fill="#0c0c0c" opacity="0.70" >yard</text>
<text x="1009.0" y="423.6" font-size="3.30" text-anchor="middle" fill="#0c0c0c" opacity="0.60" >865.5</text>
<text x="1044.0" y="423.6" font-size="3.30" text-anchor="middle" fill="#0c0c0c" opacity="0.80" >853.55</text>
<text x="1082.0" y="423.6" font-size="3.30" text-anchor="middle" fill="#0c0c0c" opacity="0.80" >852.95</text>
<text x="1110.0" y="423.6" font-size="3.30" text-anchor="middle" fill="#0c0c0c" opacity="0.60" >2.5</text>
<text x="907.0" y="429.6" font-size="3.30" textLength="20.0" lengthAdjust="spacingAndGlyphs" fill="#0c0c0c" opacity="0.75" >Outfall 15 - 16</text>
<text x="942.0" y="429.6" font-size="3.30" textLength="24.0" lengthAdjust="spacingAndGlyphs" fill="#0c0c0c" opacity="0.70" >Structure 191B</text>
<text x="983.0" y="429.6" font-size="3.30" textLength="18.0" lengthAdjust="spacingAndGlyphs" fill="#0c0c0c" opacity="0.70" >Type 16x16</text>
<text x="1032.0" y="429.6" font-size="3.30" textLength="14.0" lengthAdjust="spacingAndGlyphs" fill="#0c0c0c" opacity="0.70" >Inv. 56'</text>
<text x="1064.0" y="429.6" font-size="3.30" textLength="33.0" lengthAdjust="spacingAndGlyphs" fill="#0c0c0c" opacity="0.75" >Downstream IE. 856.6</text>
<text x="917.0" y="435.7" font-size="3.40" text-anchor="middle" font-weight="bold" fill="#0c0c0c" opacity="0.85" >16</text>
<text x="944.0" y="435.7" font-size="3.30" text-anchor="middle" fill="#0c0c0c" opacity="0.60" >n/a</text>
<text x="976.0" y="435.7" font-size="3.30" text-anchor="middle" fill="#0c0c0c" opacity="0.70" >yard</text>
<text x="1009.0" y="435.7" font-size="3.30" text-anchor="middle" fill="#0c0c0c" opacity="0.70" >—</text>
<text x="1044.0" y="435.7" font-size="3.30" text-anchor="middle" fill="#0c0c0c" opacity="0.80" >854.92</text>
<text x="1082.0" y="435.7" font-size="3.30" text-anchor="middle" fill="#0c0c0c" opacity="0.80" >853.48</text>
<text x="1110.0" y="435.7" font-size="3.30" text-anchor="middle" fill="#0c0c0c" opacity="0.60" >3.6</text>
<text x="907.0" y="441.7" font-size="3.30" textLength="20.0" lengthAdjust="spacingAndGlyphs" fill="#0c0c0c" opacity="0.75" >Outfall 16 - 17</text>
<text x="942.0" y="441.7" font-size="3.30" textLength="24.0" lengthAdjust="spacingAndGlyphs" fill="#0c0c0c" opacity="0.70" >Structure 201B</text>
<text x="983.0" y="441.7" font-size="3.30" textLength="18.0" lengthAdjust="spacingAndGlyphs" fill="#0c0c0c" opacity="0.70" >Type 16x16</text>
<text x="1032.0" y="441.7" font-size="3.30" textLength="14.0" lengthAdjust="spacingAndGlyphs" fill="#0c0c0c" opacity="0.70" >Inv. 57'</text>
<text x="1064.0" y="441.7" font-size="3.30" textLength="33.0" lengthAdjust="spacingAndGlyphs" fill="#0c0c0c" opacity="0.75" >Downstream IE. 857.7</text>
<text x="917.0" y="447.7" font-size="3.40" text-anchor="middle" font-weight="bold" fill="#0c0c0c" opacity="0.85" >17</text>
<text x="944.0" y="447.7" font-size="3.30" text-anchor="middle" fill="#0c0c0c" opacity="0.60" >n/a</text>
<text x="976.0" y="447.7" font-size="3.30" text-anchor="middle" fill="#0c0c0c" opacity="0.70" >yard</text>
<text x="1009.0" y="447.7" font-size="3.30" text-anchor="middle" fill="#0c0c0c" opacity="0.60" >867.7</text>
<text x="1044.0" y="447.7" font-size="3.30" text-anchor="middle" fill="#0c0c0c" opacity="0.80" >854.29</text>
<text x="1082.0" y="447.7" font-size="3.30" text-anchor="middle" fill="#0c0c0c" opacity="0.80" >853.01</text>
<text x="1110.0" y="447.7" font-size="3.30" text-anchor="middle" fill="#0c0c0c" opacity="0.60" >4.7</text>
<text x="907.0" y="453.8" font-size="3.30" textLength="20.0" lengthAdjust="spacingAndGlyphs" fill="#0c0c0c" opacity="0.75" >Outfall 17 - 18</text>
<text x="942.0" y="453.8" font-size="3.30" textLength="24.0" lengthAdjust="spacingAndGlyphs" fill="#0c0c0c" opacity="0.70" >Structure 211B</text>
<text x="983.0" y="453.8" font-size="3.30" textLength="18.0" lengthAdjust="spacingAndGlyphs" fill="#0c0c0c" opacity="0.70" >Type 16x16</text>
<text x="1032.0" y="453.8" font-size="3.30" textLength="14.0" lengthAdjust="spacingAndGlyphs" fill="#0c0c0c" opacity="0.70" >Inv. 58'</text>
<text x="1064.0" y="453.8" font-size="3.30" textLength="33.0" lengthAdjust="spacingAndGlyphs" fill="#0c0c0c" opacity="0.75" >Downstream IE. 858.8</text>
<text x="917.0" y="459.8" font-size="3.40" text-anchor="middle" font-weight="bold" fill="#0c0c0c" opacity="0.85" >18</text>
<text x="944.0" y="459.8" font-size="3.30" text-anchor="middle" fill="#0c0c0c" opacity="0.60" >n/a</text>
<text x="976.0" y="459.8" font-size="3.30" text-anchor="middle" fill="#0c0c0c" opacity="0.70" >yard</text>
<text x="1009.0" y="459.8" font-size="3.30" text-anchor="middle" fill="#0c0c0c" opacity="0.60" >868.8</text>
<text x="1044.0" y="459.8" font-size="3.30" text-anchor="middle" fill="#0c0c0c" opacity="0.80" >855.66</text>
<text x="1082.0" y="459.8" font-size="3.30" text-anchor="middle" fill="#0c0c0c" opacity="0.80" >854.54</text>
<text x="1110.0" y="459.8" font-size="3.30" text-anchor="middle" fill="#0c0c0c" opacity="0.60" >2.8</text>
<text x="907.0" y="465.8" font-size="3.30" textLength="20.0" lengthAdjust="spacingAndGlyphs" fill="#0c0c0c" opacity="0.75" >Outfall 18 - 19</text>
<text x="942.0" y="465.8" font-size="3.30" textLength="24.0" lengthAdjust="spacingAndGlyphs" fill="#0c0c0c" opacity="0.70" >Structure 221B</text>
<text x="983.0" y="465.8" font-size="3.30" textLength="18.0" lengthAdjust="spacingAndGlyphs" fill="#0c0c0c" opacity="0.70" >Type 16x16</text>
<text x="1032.0" y="465.8" font-size="3.30" textLength="14.0" lengthAdjust="spacingAndGlyphs" fill="#0c0c0c" opacity="0.70" >Inv. 59'</text>
<text x="1064.0" y="465.8" font-size="3.30" textLength="33.0" lengthAdjust="spacingAndGlyphs" fill="#0c0c0c" opacity="0.75" >Downstream IE. 859.9</text>
<text x="917.0" y="471.9" font-size="3.40" text-anchor="middle" font-weight="bold" fill="#0c0c0c" opacity="0.85" >19</text>
<text x="944.0" y="471.9" font-size="3.30" text-anchor="middle" fill="#0c0c0c" opacity="0.60" >n/a</text>
<text x="976.0" y="471.9" font-size="3.30" text-anchor="middle" fill="#0c0c0c" opacity="0.70" >yard</text>
<text x="1009.0" y="471.9" font-size="3.30" text-anchor="middle" fill="#0c0c0c" opacity="0.70" >—</text>
<text x="1044.0" y="471.9" font-size="3.30" text-anchor="middle" fill="#0c0c0c" opacity="0.80" >855.03</text>
<text x="1082.0" y="471.9" font-size="3.30" text-anchor="middle" fill="#0c0c0c" opacity="0.80" >854.07</text>
<text x="1110.0" y="471.9" font-size="3.30" text-anchor="middle" fill="#0c0c0c" opacity="0.60" >3.9</text>
<text x="907.0" y="477.9" font-size="3.30" textLength="20.0" lengthAdjust="spacingAndGlyphs" fill="#0c0c0c" opacity="0.75" >Outfall 19 - 20</text>
<text x="942.0" y="477.9" font-size="3.30" textLength="24.0" lengthAdjust="spacingAndGlyphs" fill="#0c0c0c" opacity="0.70" >Structure 231B</text>
<text x="983.0" y="477.9" font-size="3.30" textLength="18.0" lengthAdjust="spacingAndGlyphs" fill="#0c0c0c" opacity="0.70" >Type 16x16</text>
<text x="1032.0" y="477.9" font-size="3.30" textLength="14.0" lengthAdjust="spacingAndGlyphs" fill="#0c0c0c" opacity="0.70" >Inv. 60'</text>
<text x="1064.0" y="477.9" font-size="3.30" textLength="33.0" lengthAdjust="spacingAndGlyphs" fill="#0c0c0c" opacity="0.75" >Downstream IE. 860.0</text>
<text x="917.0" y="483.9" font-size="3.40" text-anchor="middle" font-weight="bold" fill="#0c0c0c" opacity="0.85" >20</text>
<text x="944.0" y="483.9" font-size="3.30" text-anchor="middle" fill="#0c0c0c" opacity="0.60" >n/a</text>
<text x="976.0" y="483.9" font-size="3.30" text-anchor="middle" fill="#0c0c0c" opacity="0.70" >yard</text>
<text x="1009.0" y="483.9" font-size="3.30" text-anchor="middle" fill="#0c0c0c" opacity="0.60" >870.0</text>
<text x="1044.0" y="483.9" font-size="3.30" text-anchor="middle" fill="#0c0c0c" opacity="0.80" >856.40</text>
<text x="1082.0" y="483.9" font-size="3.30" text-anchor="middle" fill="#0c0c0c" opacity="0.80" >855.60</text>
<text x="1110.0" y="483.9" font-size="3.30" text-anchor="middle" fill="#0c0c0c" opacity="0.60" >4.0</text>
</g>
<text x="913.0" y="496.5" font-size="3.10" textLength="42.0" lengthAdjust="spacingAndGlyphs" fill="#0c0c0c" opacity="0.70" >1. RIMS ARE SHOWN TO TOP OF GRATE.</text>
<text x="913.0" y="500.6" font-size="3.10" textLength="62.0" lengthAdjust="spacingAndGlyphs" fill="#0c0c0c" opacity="0.70" >2. ALL PIPE SHALL BE CLASS III RCP UNLESS NOTED.</text>
<text x="913.0" y="504.7" font-size="3.10" textLength="107.0" lengthAdjust="spacingAndGlyphs" fill="#0c0c0c" opacity="0.70" >3. CONTRACTOR SHALL VERIFY INVERTS OF EXISTING STRUCTURES PRIOR TO WORK.</text>
<text x="913.0" y="508.8" font-size="3.10" textLength="96.0" lengthAdjust="spacingAndGlyphs" fill="#0c0c0c" opacity="0.70" >4. SEE DETAIL SHEETS FOR STRUCTURE TYPES AND DIMENSIONS.</text>
<path d="M927.5 536.600V528.500H1027.800V536.600" fill="none" stroke="#161616" stroke-width="1.1"/>
<text x="977.6" y="534.8" font-size="4.60" text-anchor="middle" textLength="77.0" lengthAdjust="spacingAndGlyphs" fill="#0c0c0c" opacity="0.90" >Legend of Symbols &amp; Abbreviations</text>
<text x="920.0" y="543.0" font-size="2.90" fill="#0c0c0c" opacity="0.62" >CB  CATCH BASIN</text>
<text x="920.0" y="546.7" font-size="2.90" fill="#0c0c0c" opacity="0.62" >CO  CLEANOUT</text>
<text x="920.0" y="550.4" font-size="2.90" fill="#0c0c0c" opacity="0.62" >DI  DROP INLET</text>
<text x="920.0" y="554.1" font-size="2.90" fill="#0c0c0c" opacity="0.62" >EP  EDGE PAVEMENT</text>
<text x="920.0" y="557.8" font-size="2.90" fill="#0c0c0c" opacity="0.62" >FH  FIRE HYDRANT</text>
<text x="920.0" y="561.5" font-size="2.90" fill="#0c0c0c" opacity="0.62" >FF  FINISHED FLOOR</text>
<text x="920.0" y="565.2" font-size="2.90" fill="#0c0c0c" opacity="0.62" >INV  INVERT</text>
<text x="920.0" y="568.9" font-size="2.90" fill="#0c0c0c" opacity="0.62" >LP  LIGHT POLE</text>
<text x="920.0" y="572.6" font-size="2.90" fill="#0c0c0c" opacity="0.62" >MH  MANHOLE</text>
<text x="920.0" y="576.3" font-size="2.90" fill="#0c0c0c" opacity="0.62" >PP  POWER POLE</text>
<text x="920.0" y="580.0" font-size="2.90" fill="#0c0c0c" opacity="0.62" >RCP  CONC. PIPE</text>
<text x="920.0" y="583.7" font-size="2.90" fill="#0c0c0c" opacity="0.62" >TC  TOP OF CURB</text>
<text x="958.0" y="543.0" font-size="2.90" fill="#0c0c0c" opacity="0.62" >SS  SAN. SEWER</text>
<text x="958.0" y="546.7" font-size="2.90" fill="#0c0c0c" opacity="0.62" >SD  STORM DRAIN</text>
<text x="958.0" y="550.4" font-size="2.90" fill="#0c0c0c" opacity="0.62" >WM  WATER METER</text>
<text x="958.0" y="554.1" font-size="2.90" fill="#0c0c0c" opacity="0.62" >WV  WATER VALVE</text>
<text x="958.0" y="557.8" font-size="2.90" fill="#0c0c0c" opacity="0.62" >---  SILT FENCE</text>
<text x="958.0" y="561.5" font-size="2.90" fill="#0c0c0c" opacity="0.62" >-x-  TREE PROTECTION</text>
<text x="958.0" y="565.2" font-size="2.90" fill="#0c0c0c" opacity="0.62" >EXIST. CONTOUR</text>
<text x="958.0" y="568.9" font-size="2.90" fill="#0c0c0c" opacity="0.62" >PROP. CONTOUR</text>
<text x="1003.0" y="543.0" font-size="2.90" fill="#0c0c0c" opacity="0.62" >IP  INLET PROTECTION</text>
<text x="1003.0" y="546.7" font-size="2.90" fill="#0c0c0c" opacity="0.62" >CE  CONST. ENTRANCE</text>
<text x="1003.0" y="550.4" font-size="2.90" fill="#0c0c0c" opacity="0.62" >RR  RIP RAP</text>
<text x="1003.0" y="554.1" font-size="2.90" fill="#0c0c0c" opacity="0.62" >SB  SEDIMENT BASIN</text>
<text x="1003.0" y="557.8" font-size="2.90" fill="#0c0c0c" opacity="0.62" >DD  DIVERSION DITCH</text>
<text x="1003.0" y="561.5" font-size="2.90" fill="#0c0c0c" opacity="0.62" >TS  TEMP. SEEDING</text>
<text x="1003.0" y="565.2" font-size="2.90" fill="#0c0c0c" opacity="0.62" >PS  PERM. SEEDING</text>
<text x="1003.0" y="568.9" font-size="2.90" fill="#0c0c0c" opacity="0.62" >ECM  EROSION MAT</text>
<rect x="921" y="584.500" width="4" height="4" fill="none" stroke="#161616" stroke-width=".9"/>
<text x="928.0" y="583.0" font-size="2.90" fill="#0c0c0c" opacity="0.60" >LIMITS OF DISTURBANCE</text>
<text x="928.0" y="588.0" font-size="2.90" fill="#0c0c0c" opacity="0.60" >PROPOSED BUILDING</text>
<text x="1064.0" y="512.8" font-size="3.60" textLength="28.0" lengthAdjust="spacingAndGlyphs" fill="#0c0c0c" opacity="0.70" >EXIST. POND</text>
<path d="M1093 513l22 10" stroke="#333" stroke-width=".6" stroke-dasharray="1.5 1"/>
<text x="1200.0" y="585.0" font-size="3.80" text-anchor="middle" textLength="32.0" lengthAdjust="spacingAndGlyphs" fill="#0c0c0c" opacity="0.75" >GRAPHIC SCALE</text>
<path d="M1153.300 592.400H1247.500V596.600H1153.300Z" fill="#a6a6a6" stroke="#161616" stroke-width=".7"/>
<path d="M1153.300 594.500h4.700v-2.100h4.700v2.100h4.700v-2.100h4.700v2.100h9.400v-2.100h9.400v2.100h18.800v2.100h-18.800v-2.100h-9.400v2.100h-9.400v-2.100h-4.700v2.100h-4.700v-2.100h-4.700v2.100h-4.700z" fill="#0c0c0c"/><path d="M1209.700 592.400h37.800v2.100h-37.800z" fill="#0c0c0c"/>
<text x="1200.0" y="602.3" font-size="3.20" text-anchor="middle" fill="#0c0c0c" opacity="0.65" >( IN FEET )</text>
<text x="1200.0" y="606.0" font-size="3.20" text-anchor="middle" fill="#0c0c0c" opacity="0.65" >1 inch = 40 ft.</text>
<text x="1415.0" y="270.0" font-size="3.25" textLength="56.0" lengthAdjust="spacingAndGlyphs" font-weight="bold" fill="#0c0c0c" opacity="0.85" >NOTES:  EROSION CONTROL SEQUENCE</text>
<text x="1421.0" y="273.6" font-size="3.25" textLength="64.5" lengthAdjust="spacingAndGlyphs" fill="#0c0c0c" opacity="0.85" >1. INSTALL SILT FENCE AND CONST. ENTRANCE</text>
<text x="1426.5" y="277.1" font-size="3.25" textLength="35.6" lengthAdjust="spacingAndGlyphs" fill="#0c0c0c" opacity="0.85" >PRIOR TO ANY CLEARING.</text>
<text x="1421.0" y="280.6" font-size="3.25" textLength="35.6" lengthAdjust="spacingAndGlyphs" fill="#0c0c0c" opacity="0.85" >2. CLEAR AND GRUB SITE.</text>
<text x="1421.0" y="284.2" font-size="3.25" textLength="71.1" lengthAdjust="spacingAndGlyphs" fill="#0c0c0c" opacity="0.85" >3. INSTALL SEDIMENT BASIN &amp; DIVERSION DITCHES.</text>
<text x="1421.0" y="287.8" font-size="3.25" textLength="32.0" lengthAdjust="spacingAndGlyphs" fill="#0c0c0c" opacity="0.85" >4. ROUGH GRADE SITE.</text>
<text x="1421.0" y="291.3" font-size="3.25" textLength="28.7" lengthAdjust="spacingAndGlyphs" fill="#0c0c0c" opacity="0.85" >5. INSTALL UTILITIES.</text>
<text x="1421.0" y="294.9" font-size="3.25" textLength="72.2" lengthAdjust="spacingAndGlyphs" fill="#0c0c0c" opacity="0.85" >6. STABILIZE ALL DISTURBED AREAS WITHIN 14 DAYS</text>
<text x="1426.5" y="298.4" font-size="3.25" textLength="25.2" lengthAdjust="spacingAndGlyphs" fill="#0c0c0c" opacity="0.85" >OF LAST ACTIVITY.</text>
<text x="1421.0" y="301.9" font-size="3.25" textLength="75.1" lengthAdjust="spacingAndGlyphs" fill="#0c0c0c" opacity="0.85" >7. MAINTAIN ALL EROSION CONTROL MEASURES UNTIL</text>
<text x="1426.5" y="305.5" font-size="3.25" textLength="48.5" lengthAdjust="spacingAndGlyphs" fill="#0c0c0c" opacity="0.85" >SITE IS PERMANENTLY STABILIZED.</text>
<text x="1421.0" y="309.1" font-size="3.25" textLength="79.3" lengthAdjust="spacingAndGlyphs" fill="#0c0c0c" opacity="0.85" >8. IF THE CONTRACTOR DEVIATES FROM THIS SEQUENCE</text>
<text x="1426.5" y="312.6" font-size="3.25" textLength="75.9" lengthAdjust="spacingAndGlyphs" fill="#0c0c0c" opacity="0.85" >IT SHALL BE SUBMITTED AND APPROVED BY ENGINEER</text>
<text x="1426.5" y="316.1" font-size="3.25" textLength="77.9" lengthAdjust="spacingAndGlyphs" fill="#0c0c0c" opacity="0.85" >BEFORE WORK BEGINS. ADDITIONAL MEASURES MAY BE</text>
<text x="1426.5" y="319.7" font-size="3.25" textLength="76.3" lengthAdjust="spacingAndGlyphs" fill="#0c0c0c" opacity="0.85" >REQUIRED BY THE INSPECTOR TO PREVENT SEDIMENT</text>
<text x="1426.5" y="323.2" font-size="3.25" textLength="69.0" lengthAdjust="spacingAndGlyphs" fill="#0c0c0c" opacity="0.85" >FROM LEAVING THE SITE AT NO ADDITIONAL COST</text>
<text x="1426.5" y="326.8" font-size="3.25" textLength="66.4" lengthAdjust="spacingAndGlyphs" fill="#0c0c0c" opacity="0.85" >AND AS DIRECTED BY THE COUNTY INSPECTOR.</text>
<text x="1421.0" y="330.4" font-size="3.25" textLength="76.9" lengthAdjust="spacingAndGlyphs" fill="#0c0c0c" opacity="0.85" >9. AS-BUILT PLANS SHALL BE SUBMITTED TO ENGINEER.</text>
<text x="1331.0" y="295.5" font-size="3.60" textLength="32.0" lengthAdjust="spacingAndGlyphs" fill="#0c0c0c" opacity="0.75" >GPS S-O-RCE</text>
<text x="1331.0" y="300.5" font-size="3.40" textLength="32.0" lengthAdjust="spacingAndGlyphs" fill="#0c0c0c" opacity="0.65" >C.P. N:1189540</text>
<text x="1308.0" y="338.0" font-size="3.00" textLength="25.0" lengthAdjust="spacingAndGlyphs" fill="#0c0c0c" opacity="0.55" >VARIABLE WIDTH</text>
<text x="1308.0" y="342.0" font-size="3.00" fill="#0c0c0c" opacity="0.55" >BUFFER</text>
<text x="1447.6" y="384.0" font-size="4.00" textLength="16.0" lengthAdjust="spacingAndGlyphs" fill="#0c0c0c" opacity="0.75" >BLDG 2</text>
<text x="1450.0" y="388.5" font-size="3.00" fill="#0c0c0c" opacity="0.50" >(3 STY)</text>
<text x="1373.0" y="394.0" font-size="4.00" textLength="15.0" lengthAdjust="spacingAndGlyphs" fill="#0c0c0c" opacity="0.75" >BLDG 1</text>
<text x="1373.0" y="398.5" font-size="3.00" fill="#0c0c0c" opacity="0.50" >(3 STY)</text>
<text x="1485.0" y="459.0" font-size="3.80" textLength="15.0" lengthAdjust="spacingAndGlyphs" fill="#0c0c0c" opacity="0.70" >BLDG 3</text>
<text x="1485.0" y="464.0" font-size="3.30" textLength="15.0" lengthAdjust="spacingAndGlyphs" fill="#0c0c0c" opacity="0.60" >(FUTURE)</text>
<text x="1302.0" y="471.0" font-size="3.60" textLength="15.0" lengthAdjust="spacingAndGlyphs" fill="#0c0c0c" opacity="0.70" >POOL</text>
<text x="1302.0" y="476.0" font-size="3.60" textLength="15.0" lengthAdjust="spacingAndGlyphs" fill="#0c0c0c" opacity="0.70" >HOUSE</text>
<text x="1295.0" y="566.5" font-size="3.40" textLength="19.0" lengthAdjust="spacingAndGlyphs" fill="#0c0c0c" opacity="0.65" >CL. DITCH</text>
<text x="1256.0" y="573.5" font-size="3.00" textLength="13.0" lengthAdjust="spacingAndGlyphs" fill="#0c0c0c" opacity="0.55" >OUTLET</text>
<text x="1256.0" y="577.0" font-size="3.00" textLength="26.0" lengthAdjust="spacingAndGlyphs" fill="#0c0c0c" opacity="0.55" >STRUCTURE W/ TRASH RACK</text>
<text x="1449.0" y="499.0" font-size="3.10" textLength="38.0" lengthAdjust="spacingAndGlyphs" fill="#0c0c0c" opacity="0.70" >TEMPORARY SEDIMENT BASIN</text>
<text x="1449.0" y="502.5" font-size="3.10" textLength="38.0" lengthAdjust="spacingAndGlyphs" fill="#0c0c0c" opacity="0.70" >TO BE CONVERTED TO POND</text>
<text x="1449.0" y="506.0" font-size="3.10" textLength="38.0" lengthAdjust="spacingAndGlyphs" fill="#0c0c0c" opacity="0.70" >AFTER SITE STABILIZATION</text>
<text x="1449.0" y="509.5" font-size="3.10" textLength="33.0" lengthAdjust="spacingAndGlyphs" fill="#0c0c0c" opacity="0.65" >SEE DETAIL SHEET</text>
<text x="1394.0" y="431.5" font-size="3.00" textLength="28.0" lengthAdjust="spacingAndGlyphs" fill="#0c0c0c" opacity="0.60" >PROPOSED RETAINING</text>
<text x="1394.0" y="435.0" font-size="3.00" textLength="28.0" lengthAdjust="spacingAndGlyphs" fill="#0c0c0c" opacity="0.60" >WALL BY OTHERS</text>
<text x="1394.0" y="438.5" font-size="3.00" textLength="18.0" lengthAdjust="spacingAndGlyphs" fill="#0c0c0c" opacity="0.60" >SEE STRUCT.</text>
<text x="1369.0" y="568.0" font-size="3.00" textLength="18.0" lengthAdjust="spacingAndGlyphs" fill="#0c0c0c" opacity="0.55" >RIP RAP APRON</text>
<text x="1362.0" y="572.5" font-size="3.00" textLength="25.0" lengthAdjust="spacingAndGlyphs" fill="#0c0c0c" opacity="0.55" >SEE DETAIL</text>
<text x="1395.0" y="568.0" font-size="3.00" textLength="25.0" lengthAdjust="spacingAndGlyphs" fill="#0c0c0c" opacity="0.60" >LEVEL SPREADER</text>
<text x="1395.0" y="571.5" font-size="3.00" textLength="25.0" lengthAdjust="spacingAndGlyphs" fill="#0c0c0c" opacity="0.60" >50 LF @ 0.0%</text>
<text x="1398.0" y="575.0" font-size="3.00" textLength="22.0" lengthAdjust="spacingAndGlyphs" fill="#0c0c0c" opacity="0.60" >SEE DETAIL 5</text>
<text x="1403.0" y="578.5" font-size="3.00" textLength="17.0" lengthAdjust="spacingAndGlyphs" fill="#0c0c0c" opacity="0.60" >SHEET CV-6</text>
<text x="1553.0" y="609.0" font-size="12.40" text-anchor="end" textLength="27.5" lengthAdjust="spacingAndGlyphs" fill="#0c0c0c" opacity="0.95" >CV-3</text>
<text transform="translate(1540.0 501.0) rotate(-90)" font-size="7.60" textLength="69.0" lengthAdjust="spacingAndGlyphs" fill="#0c0c0c" opacity="0.85">Stonecrest Apartments</text>
<text transform="translate(1548.0 483.0) rotate(-90)" font-size="7.60" textLength="32.0" lengthAdjust="spacingAndGlyphs" fill="#0c0c0c" opacity="0.85">Expansion</text>
<text transform="translate(1556.5 491.0) rotate(-90)" font-size="5.60" textLength="47.0" lengthAdjust="spacingAndGlyphs" font-style="italic" fill="#0c0c0c" opacity="0.70">Cherokee County, SC</text>
<text transform="translate(1536.5 590.5) rotate(-90)" font-size="7.60" textLength="36.0" lengthAdjust="spacingAndGlyphs" fill="#0c0c0c" opacity="0.85">Grading and</text>
<text transform="translate(1544.5 590.5) rotate(-90)" font-size="7.60" textLength="79.0" lengthAdjust="spacingAndGlyphs" fill="#0c0c0c" opacity="0.85">Erosion Control Layout</text>
<text transform="translate(1557.0 215.0) rotate(-90)" font-size="3.40" textLength="27.0" lengthAdjust="spacingAndGlyphs" fill="#0c0c0c" opacity="0.55">REVISIONS</text>
<text transform="translate(1557.0 251.0) rotate(-90)" font-size="3.40" textLength="24.0" lengthAdjust="spacingAndGlyphs" fill="#0c0c0c" opacity="0.55">DATE: 4/2019</text>
<text transform="translate(1524.0 390.0) rotate(-90)" font-size="3.20" textLength="12.0" lengthAdjust="spacingAndGlyphs" fill="#0c0c0c" opacity="0.50">REV. NO.</text>
<text transform="translate(1524.0 508.0) rotate(-90)" font-size="3.20" textLength="8.0" lengthAdjust="spacingAndGlyphs" fill="#0c0c0c" opacity="0.50">SEAL</text>
</g>
<path d="M1527 218H1558.500M1521.500 334H1558.500M1526 425H1558.500M1521.500 592.500H1558.500" stroke="#0a0a0a" stroke-width="1.700" fill="none"/>
<path d="M1527 255.500H1558.500M1521.500 508.500H1558.500" stroke="#0a0a0a" stroke-width="2.600" fill="none"/>
<path d="M1526 334V614M1530.400 334V424M1544 334V424M1549.700 334V424M1549.500 509V592" stroke="#1c1c1c" stroke-width=".9" fill="none"/>
<path d="M1535 334V424M1539.500 334V424M1554 334V424M1549.500 549h9M1549.500 570h9M1553 549v43" stroke="#3a3a3a" stroke-width=".5" fill="none"/>
<rect x="1521.500" y="182.500" width="5" height="152" fill="#9a9a9a" opacity=".6"/>
<path d="M1182.1 190.5L1171.0 250.4M1255.3 248.2L1253.1 263.7L1242.0 285.9L1210.9 312.5M1210.9 269.3L1233.1 248.2L1268.6 269.3M1210.9 291.5L1242.0 263.7M1295.2 328.1L1310.7 334.7L1332.9 335.8M1179.9 261.5L1188.7 259.3L1190.9 263.7L1179.9 281.5L1171.0 290.4M1184.3 263.7L1179.9 279.3L1173.2 288.1M1146.6 343.6L1153.2 374.6L1173.2 388.0M1206.5 381.3L1233.1 381.3M1208.7 386.8L1233.1 386.8M1208.7 391.3L1233.1 391.3M1331.8 293.7L1340.0 293.7M1331.8 299.2L1340.0 299.2M1308.5 335.8L1332.9 335.2M1308.5 340.3L1321.8 340.3M1324.0 239.3L1340.0 243.8M1288.6 250.4L1295.2 260.4M1122.7 503.4L1179.4 476.2L1236.1 435.4M1113.6 517.0L1168.1 494.4L1245.2 446.7M1131.8 485.3L1174.9 464.9L1208.9 442.2M1145.4 535.2L1213.4 508.0L1258.8 476.2M1168.1 539.7L1227.0 517.0L1267.9 487.5M1247.5 535.2L1267.9 517.0L1279.2 496.6M1100.0 512.5L1129.5 496.6L1174.9 446.7L1195.3 417.2M1245.2 412.7L1267.9 435.4L1277.0 464.9M1249.7 430.8L1272.4 449.0M1134.0 562.4L1190.7 562.4M1113.6 553.3L1168.1 559.0L1240.7 557.9M1245.2 557.9L1258.8 571.5M1256.5 572.6L1270.1 572.6M1256.5 576.0L1281.5 576.0M1295.1 565.1L1313.2 565.1M1281.5 539.7L1292.8 553.3L1340.0 548.8M1362.2 190.5L1333.3 228.3L1320.0 248.2M1368.8 190.5L1320.0 261.6M1386.6 197.2L1331.1 279.3M1331.1 294.8L1363.3 294.8M1331.1 299.7L1363.3 299.7M1320.0 335.9L1333.3 335.2M1320.0 381.4L1342.2 370.3L1364.4 361.4L1391.0 352.5L1413.2 350.3M1424.3 375.8L1485.3 375.8M1348.9 363.6L1391.0 354.8M1348.9 368.1L1393.2 359.2M1348.9 372.5L1393.2 363.6M1351.1 377.0L1393.2 368.1M1353.3 381.4L1393.2 372.5M1371.0 471.1L1396.5 459.5L1431.3 459.5L1454.4 482.7L1468.4 492.0L1496.2 489.7M1389.5 533.7L1412.7 501.3L1449.8 487.4L1482.3 492.0L1496.2 501.3M1396.5 552.3L1426.6 519.8L1463.7 505.9L1491.5 510.5L1514.7 501.3M1440.5 561.5L1468.4 547.6L1491.5 533.7L1514.7 543.0M1378.0 466.5L1403.4 461.9L1428.9 464.2L1445.2 482.7L1449.8 498.9M1382.6 473.4L1408.1 466.5L1426.6 468.8L1440.5 487.4L1442.9 505.9M1373.3 478.1L1396.5 473.4L1419.7 478.1L1431.3 496.6L1433.6 515.2M1463.7 556.9L1482.3 543.0L1505.4 538.4M1449.8 529.1L1473.0 519.8L1496.2 519.8M1496.2 501.3L1514.7 498.9M1496.2 505.9L1505.4 529.1L1514.7 533.7M1500.8 492.0L1512.4 519.8M1347.8 529.1L1333.9 547.6M1366.4 524.4L1343.2 552.3M1394.2 430.6L1422.0 430.6M1394.2 434.0L1422.0 434.0M1394.2 437.5L1412.7 437.5M1448.7 497.8L1486.9 497.8M1448.7 501.3L1486.9 501.3M1448.7 504.7L1486.9 504.7M1448.7 508.2L1482.3 508.2M1368.7 567.3L1387.2 567.3M1361.7 572.0L1387.2 572.0M1395.3 567.3L1420.8 567.3M1395.3 570.8L1420.8 570.8M1398.8 574.3L1420.8 574.3M1403.4 577.3L1420.8 577.3M1433.6 424.8L1468.4 423.6" fill="none" stroke="#101010" stroke-width=".7" stroke-dasharray="1 1.300" opacity=".7"/>
<path d="M1223.1 297.0L1239.8 297.0M1252.0 297.0L1268.6 297.0M1178.3 460.3L1211.2 492.1M1211.2 450.1L1238.4 421.8M1140.8 536.3L1238.4 536.3M1134.0 546.5L1245.2 546.5M1100.0 556.7L1240.7 556.7M1292.8 529.5L1340.0 531.1M1242.9 411.6L1281.5 415.0M1435.9 409.7L1440.5 419.0M1505.4 430.6L1510.1 438.7" fill="none" stroke="#101010" stroke-width="1.500" opacity=".9"/>
<path d="M1210.9 269.3L1233.1 269.3L1233.1 267.1L1235.3 267.1L1235.3 269.3L1268.6 269.3L1268.6 297.0L1250.8 297.0L1250.8 292.6L1239.8 292.6L1239.8 297.0L1222.0 297.0L1222.0 291.5L1210.9 291.5L1210.9 269.3M1222.0 301.4L1222.0 310.3L1219.8 313.6L1206.5 313.6L1204.3 317.0L1193.2 399.0M1222.0 301.4L1279.7 302.6M1273.0 302.6L1273.0 312.5M1229.8 321.4L1226.4 323.6L1224.2 330.3L1226.4 336.9L1233.1 339.2L1242.0 338.0M1229.8 332.5L1264.2 332.5L1264.2 325.8L1268.6 325.8M1253.1 334.7L1246.4 383.5L1253.1 384.6L1259.7 352.5M1219.8 358.0L1235.3 360.2L1237.5 363.6L1233.1 374.6L1220.9 375.8L1216.5 368.0L1219.8 358.0M1289.7 305.9L1295.2 299.2L1340.0 218.3M1299.6 308.1L1340.0 234.9M1277.5 343.6L1275.2 352.5L1277.5 363.6L1286.3 374.6L1299.6 383.5M1279.7 359.1L1340.0 360.2M1299.6 383.5L1340.0 374.6M1299.6 383.5L1304.1 394.6L1340.0 388.0M1278.6 270.4L1278.6 275.9L1281.9 275.9M1278.6 292.6L1278.6 287.7L1281.9 287.7M1284.1 289.2L1284.1 301.4M1287.4 289.2L1287.4 303.7M1155.5 264.8L1162.1 270.4M1199.8 242.7L1204.3 247.1M1242.0 246.0L1246.4 249.3M1178.7 294.8L1183.2 298.1M1151.0 317.0L1154.3 320.3M1175.4 340.3L1178.7 343.6M1168.8 364.7L1172.1 368.0M1166.5 389.1L1169.9 392.4M1137.7 391.3L1141.0 394.6M1215.4 338.0L1218.7 341.4M1213.1 361.3L1216.5 365.8M1300.8 258.2L1310.7 260.4L1306.3 261.5M1193.0 390.0L1191.9 401.3L1199.8 403.6L1199.8 415.0L1188.5 417.2L1183.9 444.4L1181.7 494.4L1190.7 494.4L1191.9 514.8L1186.2 514.8L1186.2 506.8L1140.8 506.8L1140.8 513.6M1213.4 396.8L1227.0 395.7L1231.6 400.2L1229.3 405.9L1215.7 405.9L1212.3 401.3L1213.4 396.8M1211.2 418.4L1220.2 418.4L1222.5 421.8L1218.0 426.3L1216.8 449.0L1213.4 450.1M1205.5 450.1L1213.4 449.0L1213.4 467.1L1205.5 468.3L1203.2 458.1L1205.5 450.1M1211.2 450.1L1211.2 492.1M1216.8 450.1L1216.8 501.2M1238.4 421.8L1236.1 428.6L1245.2 429.7L1240.7 435.4L1238.4 535.2M1203.2 494.4L1213.4 493.2L1215.7 502.3L1236.1 501.2M1203.2 494.4L1204.4 514.8L1208.9 514.8L1208.9 506.8L1236.1 506.8L1236.1 536.3M1140.8 526.1L1140.8 536.3M1136.3 514.8L1136.3 535.2M1129.5 535.2L1136.3 540.9L1240.7 540.9L1247.5 535.2L1245.2 521.6M1127.2 551.1L1245.2 551.1M1109.1 548.8L1109.1 562.4M1148.8 443.3L1148.8 451.3L1152.2 451.3M1156.7 424.0L1168.1 424.0L1168.1 427.4M1149.9 480.7L1149.9 494.4L1174.9 494.4M1173.7 484.1L1173.7 494.4M1247.5 438.8L1247.5 446.7M1263.3 438.8L1270.1 438.8L1270.1 446.7M1270.1 481.9L1272.4 481.9L1272.4 491.0L1270.1 491.0M1178.3 444.4L1178.3 480.7M1176.0 445.6L1181.7 445.6M1176.0 458.1L1181.7 458.1M1176.0 475.1L1181.7 475.1M1235.0 456.9L1242.9 456.9M1235.0 470.5L1242.9 470.5M1235.0 486.4L1242.9 486.4M1281.5 537.5L1340.0 537.5M1242.9 521.6L1254.3 537.5M1247.5 520.4L1258.8 535.2M1252.0 508.0L1265.6 508.0M1254.3 513.6L1263.3 513.6M1245.2 403.6L1249.7 399.1L1258.8 400.2M1258.8 390.0L1277.0 403.6L1295.1 412.7M1265.6 390.0L1292.8 410.4M1295.1 412.7L1288.3 419.5L1295.1 435.4L1304.2 449.0M1290.6 444.4L1304.2 442.2L1306.4 451.3L1297.4 453.5M1313.2 453.5L1313.2 458.1L1326.9 458.1M1326.9 458.1L1331.4 462.6L1331.4 526.1M1331.4 467.1L1340.0 467.1M1331.4 480.7L1340.0 480.7M1331.4 489.8L1340.0 489.8M1331.4 503.4L1340.0 503.4M1331.4 513.6L1340.0 513.6M1305.3 496.6L1311.0 494.4L1317.8 496.6L1321.2 501.2L1317.8 508.0L1311.0 512.5L1304.2 510.2L1303.0 503.4L1305.3 496.6M1295.1 396.8L1304.2 390.0M1322.3 399.1L1329.1 390.0M1326.9 408.1L1340.0 399.1M1324.6 442.2L1340.0 435.4M1326.9 451.3L1340.0 446.7M1353.3 212.7L1364.4 217.2L1359.9 228.3M1342.2 212.7L1333.3 228.3M1335.5 239.4L1344.4 234.9L1348.9 238.2L1359.9 233.8M1324.4 263.8L1333.3 248.2M1335.5 325.9L1353.3 317.0L1364.4 312.6L1383.2 306.4M1364.4 312.6L1371.0 309.3L1369.9 317.0M1439.8 363.6L1515.3 360.3M1320.0 374.7L1342.2 368.1M1324.4 385.8L1333.3 396.9L1320.0 400.0M1415.4 371.4L1417.6 399.1M1424.3 375.8L1424.3 399.1M1485.3 375.8L1485.3 399.1M1493.1 368.1L1493.1 399.1M1320.0 399.3L1329.3 394.6L1343.2 403.9L1338.5 413.2L1329.3 408.5L1320.0 399.3M1333.9 415.5L1340.9 424.8L1359.4 431.7M1324.6 443.3L1333.9 438.7L1343.2 443.3L1343.2 459.5L1333.9 466.5M1428.9 408.5L1514.7 406.2M1428.9 408.5L1428.9 420.1M1428.9 420.1L1517.0 420.1M1431.3 424.8L1514.7 424.8M1431.3 439.8L1517.0 439.8M1435.9 408.5L1435.9 420.1M1440.5 408.5L1440.5 420.1M1452.1 408.5L1452.1 420.1M1455.6 408.5L1455.6 420.1M1468.4 408.5L1468.4 420.1M1473.0 408.5L1473.0 420.1M1486.9 408.5L1486.9 420.1M1491.5 408.5L1491.5 420.1M1512.4 408.5L1512.4 420.1M1445.2 428.2L1445.2 439.8M1452.1 428.2L1452.1 439.8M1459.1 428.2L1459.1 439.8M1466.0 428.2L1466.0 439.8M1482.3 428.2L1482.3 439.8M1486.9 428.2L1486.9 439.8M1498.5 428.2L1498.5 439.8M1503.1 428.2L1503.1 439.8M1512.4 428.2L1512.4 439.8M1482.3 420.1L1470.7 439.8M1354.8 422.5L1364.0 422.5L1364.0 431.7L1357.1 431.7M1354.8 448.0L1364.0 445.6L1364.0 457.2L1354.8 457.2L1354.8 466.5L1364.0 468.8L1364.0 482.7L1354.8 482.7M1329.3 461.9L1343.2 461.9M1329.3 487.4L1343.2 487.4M1329.3 503.6L1343.2 503.6M1354.8 501.3L1364.0 501.3M1329.3 522.1L1329.3 515.2L1364.0 515.2L1364.0 522.1M1333.9 461.9L1333.9 515.2M1325.8 482.7L1325.8 526.8M1330.4 482.7L1330.4 526.8M1405.8 545.3L1442.9 545.3L1442.9 549.9" fill="none" stroke="#101010" stroke-width=".9" opacity=".85"/>
<path d="M1176.5 251.5L1153.2 399.0M1295.2 260.4L1294.1 279.3L1290.8 308.1M1166.5 312.5L1204.3 305.9M1171.0 325.8L1224.2 334.7M1166.5 352.5L1215.4 350.2M1155.5 370.2L1188.7 388.0M1284.1 308.1L1321.8 248.2L1340.0 219.4M1154.4 390.0L1129.5 535.2M1278.1 412.7L1278.1 562.4M1283.8 435.4L1283.8 526.1M1300.8 467.1L1300.8 483.0M1295.1 442.2L1295.1 526.1M1393.2 359.2L1431.0 359.2L1437.6 361.4L1444.3 365.9L1515.3 359.2M1342.2 381.4L1404.3 374.7L1411.0 381.4L1417.6 399.1M1497.5 383.6L1504.2 374.7L1515.3 370.3M1497.5 388.0L1508.6 396.9M1343.2 420.1L1408.1 410.9L1428.9 408.5M1343.2 436.4L1389.5 427.1L1426.6 422.5M1320.0 466.5L1357.1 441.0L1389.5 445.6L1428.9 441.0M1459.1 451.4L1459.1 473.4L1468.4 474.6M1459.1 451.4L1468.4 451.4M1482.3 451.4L1500.8 451.4M1473.0 475.8L1514.7 475.8M1470.7 482.7L1514.7 482.7M1373.3 466.5L1401.1 457.2L1428.9 457.2L1449.8 482.7L1459.1 501.3M1350.1 529.1L1350.1 549.9L1320.0 549.9M1320.0 531.4L1350.1 529.1M1368.7 552.3L1389.5 531.4" fill="none" stroke="#101010" stroke-width=".9" stroke-dasharray="2.600 1.800" opacity=".85"/>
<path d="M1171.0 250.4L1295.2 260.4M1171.0 250.4L1147.7 399.0M1202.0 263.7L1188.7 399.0M1233.1 339.2L1233.1 356.9M1277.5 343.6L1340.0 248.2M1148.8 390.0L1122.7 544.3M1193.0 390.0L1186.2 415.0L1179.4 446.7L1179.4 458.1M1385.5 190.5L1373.3 208.3L1359.9 228.3L1342.2 252.7L1320.0 286.0M1362.9 522.6L1410.4 522.6M1389.5 531.4L1491.5 529.1L1496.2 505.9" fill="none" stroke="#101010" stroke-width="1.100" stroke-dasharray="3 1.800" opacity=".8"/>
<rect x="1237.500" y="313.600" width="44.500" height="9" fill="url(#hat)" stroke="#222" stroke-width=".6"/>
<path d="M1345 361l50-11v13l-48 12z" fill="url(#dots)" opacity=".8"/>
<circle cx="1315.500" cy="421.500" r="9.500" fill="none" stroke="#1a1a1a" stroke-width=".9"/><circle cx="1315.500" cy="421.500" r="4.500" fill="none" stroke="#333" stroke-width=".6"/>
<path d="M1293 412a25 25 0 0 1 14-14M1329 401a25 25 0 0 1 11 14M1338 432a25 25 0 0 1 -10 11M1300 443a25 25 0 0 1 -9 -13" fill="none" stroke="#151515" stroke-width="1.100"/>
<path d="M1374 482v6M1377 482v6M1380 482v6M1383 482v6M1386 482v6M1389 482v6M1374 495v6M1377 495v6M1380 495v6M1383 495v6M1386 495v6M1389 495v6M1374 508v6M1377 508v6M1380 508v6M1383 508v6M1386 508v6M1389 508v6" stroke="#151515" stroke-width=".7" opacity=".7"/>
<path d="M1372 470c8-12 30-22 52-20c14 2 24 12 30 30M1368 500c4-30 30-46 60-42" fill="none" stroke="#151515" stroke-width="1" stroke-dasharray="1.200 1.600" opacity=".8"/>
<path d="M1131.0 538.5H1246.0M1132.2 541.0H1245.2M1133.4 543.5H1244.4M1134.6 546.0H1243.6M1135.8 548.5H1242.8M1137.0 551.0H1242.0M1138.2 553.5H1241.2" stroke="#0e0e0e" stroke-width=".9" opacity=".8"/>
<path d="M1100 557c30 4 80 5 140 3c20-1 40-8 60-4" fill="none" stroke="#151515" stroke-width="1" stroke-dasharray="1 1.200" opacity=".85"/>
<path d="M1125 560c30 3 90 3 120 0M1130 563c30 2 60 2 90 0" fill="none" stroke="#151515" stroke-width=".8" stroke-dasharray="1 1.500" opacity=".7"/>
<path d="M1181.0 298.5l-1.6 3.2M1218.3 364.6l6.9 1.3M1198.7 506.7l4.4 1.8M1234.4 543.9l-1.5 6.0M1275.1 341.2l3.5 1.7M1178.3 503.4l6.5 4.1M1236.4 366.7l-0.5 3.5M1243.8 383.7l4.2 6.4M1203.8 344.3l-6.9 5.2M1167.0 428.9l-0.8 10.0M1252.4 340.7l-3.9 0.2M1197.6 485.2l6.1 3.2M1258.6 428.5l-5.1 2.1M1246.4 435.1l-1.7 6.4M1271.8 543.0l0.7 8.3M1237.9 557.9l-4.5 2.8M1191.9 457.9l6.7 0.5M1134.4 488.6l4.6 2.0M1192.8 520.4l6.4 1.7M1220.7 524.1l-8.4 5.3M1173.0 379.9l4.3 9.1M1165.1 401.4l-1.4 4.9M1189.0 426.4l-8.4 1.3M1214.7 442.2l-1.8 2.9M1282.3 492.2l-8.7 3.6M1193.1 374.9l7.7 2.6M1183.8 268.2l4.2 0.0M1232.1 297.8l4.1 4.1M1188.1 289.8l-9.7 5.0M1206.0 401.0l3.7 1.0M1184.3 333.5l-3.7 2.2M1128.1 544.9l-0.4 4.2M1219.6 260.3l-1.0 10.8M1275.9 466.4l4.0 4.3M1153.4 489.8l-0.9 9.2M1182.0 320.7l-9.0 6.1M1274.1 500.3l-7.5 4.8M1163.9 411.4l1.4 2.9M1169.6 465.3l-6.5 0.9M1292.1 364.3l3.7 3.1M1233.8 529.3l-6.0 3.3M1238.9 498.3l8.0 2.2M1284.1 492.9l-4.8 4.8M1155.4 495.1l4.7 8.1M1295.0 373.9l3.2 10.1M1251.6 304.4l3.9 1.6M1283.3 500.4l8.6 4.3M1185.7 421.0l2.9 1.2M1216.7 539.6l2.1 9.8M1269.4 317.0l3.8 3.8M1166.3 432.6l4.4 4.6M1147.1 532.3l3.0 6.0M1226.7 530.5l2.6 10.0M1212.3 415.8l-0.2 3.1M1201.5 308.4l9.4 0.1M1154.3 397.8l-4.8 5.7M1181.4 411.7l-1.6 9.1M1167.7 337.3l-5.3 4.6M1222.9 486.1l-6.3 1.8M1231.8 407.7l-0.3 8.5M1203.6 416.3l0.7 10.5M1247.1 522.0l-5.0 0.9M1222.5 542.5l-3.6 2.0M1262.0 528.3l7.7 4.1M1240.2 296.0l-10.0 3.9M1162.6 545.4l2.2 6.5M1152.4 384.9l-0.3 5.7M1158.5 350.1l-2.0 2.4M1221.5 387.7l5.6 0.3M1233.8 409.8l10.7 2.2M1262.8 551.3l4.8 1.7M1171.6 291.9l2.5 10.0M1268.1 331.7l9.2 4.7M1224.4 467.7l3.3 1.0M1245.1 383.0l10.2 2.4M1235.7 498.9l9.5 2.6M1135.7 517.7l0.8 5.7M1221.3 537.4l2.7 3.0M1216.7 325.4l4.0 1.4M1178.9 345.9l-3.9 3.6M1212.0 306.8l1.5 2.8M1253.0 421.7l5.6 3.8M1288.5 284.7l-5.4 3.5M1211.1 509.1l2.3 6.7M1245.0 554.6l4.6 8.5M1248.4 447.9l1.7 5.5M1136.4 480.2l3.0 3.1M1138.9 511.1l-7.7 3.3M1173.6 326.6l4.0 5.3M1151.7 389.3l7.2 7.9M1295.2 420.5l7.7 7.5M1178.5 361.8l6.1 0.0M1207.5 406.9l5.7 4.2M1177.5 323.7l-1.9 7.0M1256.1 454.5l-6.3 7.8M1192.6 352.4l-4.2 0.2M1251.5 450.1l9.6 1.3M1281.0 445.2l-6.4 7.0M1148.5 413.3l-0.1 9.7M1265.6 506.5l-2.6 9.8M1244.2 465.5l2.4 2.1M1142.5 509.4l-1.5 7.9M1234.2 461.6l0.1 3.0M1264.4 482.5l-0.1 7.3M1240.0 272.3l-3.4 3.7M1252.4 315.2l-7.4 7.9M1210.9 369.8l0.6 8.5M1259.0 442.0l-1.6 3.3M1254.8 345.8l-0.7 3.0M1242.3 465.2l-2.8 4.5M1214.9 395.1l0.4 3.9M1281.3 313.4l-10.5 0.7M1268.3 550.2l0.8 5.1M1160.9 543.2l6.0 4.7M1148.9 413.4l-4.0 0.6M1268.4 408.7l-8.1 3.0M1164.7 528.5l0.1 3.2M1203.3 345.0l5.2 2.5M1179.6 510.8l9.0 0.0M1271.7 289.0l-8.5 2.0M1282.7 341.3l2.4 5.7M1187.5 383.8l2.2 2.6M1141.9 509.1l6.5 8.2M1167.9 333.8l-0.2 4.5M1189.7 546.5l-8.9 3.4M1235.0 533.3l-7.3 1.4M1250.6 267.2l-4.4 4.9M1256.5 450.5l2.1 2.7M1287.1 291.2l0.5 5.7M1176.4 479.6l-5.1 0.4M1239.5 344.7l-1.1 6.1M1160.6 531.0l0.0 4.8M1203.2 295.0l3.1 2.1M1184.2 280.1l3.7 3.5M1224.3 525.3l-4.5 4.5M1196.8 413.4l2.2 5.3M1212.6 445.9l-4.3 2.0M1171.7 328.5l2.0 6.2M1281.6 397.8l-0.8 2.9M1192.9 537.5l-8.4 5.1M1215.9 462.1l-8.6 1.6M1237.9 487.6l1.0 7.3M1164.9 535.3l-2.4 4.9M1236.0 467.2l3.3 1.2M1216.3 431.5l1.6 4.5M1177.1 393.9l-8.1 1.0M1279.5 398.4l3.7 3.3M1178.1 258.7l0.0 8.4M1197.9 331.2l-5.2 9.0M1183.5 381.5l-2.5 3.9M1264.3 479.7l-0.1 4.6M1268.3 323.1l7.0 5.8M1175.9 545.2l0.1 4.5M1163.3 380.4l-5.3 9.2M1161.5 552.0l3.1 1.5M1282.1 524.1l-7.3 8.2M1288.0 353.4l8.8 5.8M1255.4 261.8l-3.0 5.2M1189.8 354.2l2.6 1.5M1173.2 360.3l-4.0 0.6M1186.8 505.0l-5.5 3.4M1189.6 535.2l4.9 3.4M1281.9 261.3l2.6 9.1M1258.9 264.5l3.5 0.4M1285.9 331.2l-7.1 7.3M1183.7 335.9l-7.9 1.1M1170.1 472.7l2.8 4.4M1285.3 447.3l-3.1 0.6M1165.2 398.4l-10.5 1.4M1192.0 329.3l1.5 6.8M1287.3 308.3l-7.2 5.2M1268.8 490.0l-1.9 5.3M1180.2 363.5l-2.8 2.3M1158.7 483.9l2.5 2.5M1181.3 553.9l-10.2 3.9M1170.6 277.9l6.7 2.1M1248.9 389.7l4.7 4.3M1233.2 459.6l-6.9 7.0M1240.9 289.3l-4.7 2.6M1223.8 366.9l-3.1 3.4M1167.5 327.6l8.9 4.7M1225.8 352.5l3.5 10.4M1213.3 323.3l-6.8 4.7M1207.6 504.3l-9.0 5.0M1295.2 431.6l-5.8 1.3M1276.4 390.3l6.3 6.7M1290.4 284.6l-2.4 7.6M1162.3 365.6l4.2 2.0M1168.9 436.6l-2.1 4.1M1243.4 309.0l2.6 3.8M1264.0 420.8l3.7 0.8M1193.6 421.4l-1.6 3.4M1152.8 466.2l1.5 5.1M1178.1 545.6l4.2 6.3M1186.9 380.3l-10.0 4.5M1188.0 312.7l-3.0 3.5M1198.6 504.7l2.9 9.6M1205.1 302.1l7.4 0.3M1236.8 532.2l7.7 2.2M1189.3 407.4l4.7 2.3M1215.7 537.1l6.5 2.3M1265.6 549.8l3.3 2.3M1209.0 268.4l-5.9 1.4M1283.1 443.1l-3.6 2.2M1262.3 320.4l2.9 9.3M1269.9 308.4l4.8 3.9M1215.1 370.1l4.6 1.9M1251.6 528.4l7.4 1.0M1257.3 263.7l-3.4 1.9M1229.5 421.4l-2.1 5.0M1197.9 431.4l1.9 8.0M1202.6 387.0l7.9 0.6M1210.2 324.5l-6.8 6.2M1204.7 307.3l0.3 3.8M1213.8 264.6l-1.5 3.3M1253.1 491.5l-0.1 3.4M1212.7 368.4l-4.0 0.6M1274.8 558.8l-6.3 7.1M1158.1 554.4l0.3 10.6M1285.2 302.9l-8.2 6.4M1257.1 300.9l-4.9 1.7M1267.6 296.2l-0.1 10.4M1160.7 333.0l-0.1 5.6M1152.4 540.4l-5.4 8.6M1153.7 493.7l6.8 2.6M1236.0 362.8l-6.9 2.9M1226.1 523.8l10.4 3.5M1234.8 373.4l-4.1 3.0M1187.4 487.5l0.8 4.3M1254.9 266.9l-4.2 2.7" fill="none" stroke="#141414" stroke-width="0.8" opacity="0.55"/>
<path d="M1236.5 555.1l4.5 -5.6M1150.3 441.7l6.3 -5.5M1214.2 527.8l10.1 -2.9M1186.5 284.8l7.3 -2.0M1163.5 431.7l8.1 -6.2M1207.6 293.5l11.2 -7.3M1166.9 298.0l12.7 -0.5M1261.7 375.8l6.5 -1.1M1223.0 359.9l10.4 -8.4M1253.1 328.5l9.5 -8.9M1195.5 325.2l4.1 0.5M1221.0 541.8l5.3 -1.2M1159.1 439.3l7.0 -9.9M1176.8 266.9l11.5 -5.9M1261.8 472.3l11.2 2.6M1205.9 480.5l7.8 -3.5M1183.1 482.9l8.7 -7.0M1170.8 422.6l3.9 -7.4M1262.8 413.2l12.0 -6.5M1162.2 523.1l4.1 0.2M1169.8 324.7l10.2 -5.3M1181.5 523.1l2.0 -7.0M1166.1 531.5l7.3 -7.8M1296.3 396.6l8.2 -9.3M1246.8 516.1l5.5 -8.0M1178.2 317.3l9.9 -2.4M1137.7 532.5l4.7 -2.0M1287.5 358.2l5.0 -2.0M1245.9 447.2l3.7 -2.8M1227.9 363.9l6.7 -10.2M1268.2 526.5l12.9 2.5M1290.2 285.0l6.0 -1.0M1273.2 502.1l6.5 -8.0M1174.6 282.8l2.9 -4.0M1257.3 315.1l3.5 -2.4M1169.2 339.0l11.1 -1.3M1188.8 350.8l12.5 -0.6M1232.8 261.5l7.0 -4.2M1200.8 490.1l6.8 -6.5M1162.1 517.6l4.9 -0.0M1268.3 304.5l11.4 -2.5M1210.4 403.4l10.8 -5.2M1156.5 404.3l4.5 -4.9M1290.1 339.4l6.1 0.6M1247.1 405.5l4.8 -0.3M1262.7 466.7l11.8 -1.6M1234.5 361.5l9.6 -8.7M1139.2 525.6l4.1 -1.0M1160.3 333.1l7.7 -0.9M1279.6 323.9l6.6 -5.5M1217.6 484.4l6.8 -3.2M1181.5 299.8l7.2 -10.1M1240.5 480.5l11.3 -3.1M1225.9 290.8l8.6 -1.0M1279.8 325.3l10.4 -3.7M1272.5 299.6l5.5 -1.0M1167.6 352.6l5.8 -4.4M1157.3 552.3l10.0 -5.2M1141.9 548.4l13.6 -2.4M1263.9 477.9l8.1 -2.0M1158.5 448.5l7.6 -2.1M1263.2 465.6l8.6 -2.7M1235.3 394.7l8.0 -1.2M1254.4 531.7l8.3 -0.7M1225.0 482.7l8.8 -7.0M1278.9 490.4l10.4 -3.6M1274.0 461.3l5.5 -4.6M1234.6 282.1l6.0 -5.6M1261.7 471.7l6.6 -4.9M1204.1 443.4l6.5 -4.9M1242.8 538.5l11.4 -2.8M1192.4 402.9l13.7 0.2M1152.3 492.8l5.0 -0.3M1225.1 418.6l9.2 -6.3M1214.1 448.9l7.9 -2.0M1244.4 372.9l7.9 -8.5M1145.5 555.2l5.8 -3.4M1194.3 256.1l7.7 -2.9M1198.0 467.1l5.1 -3.6M1254.5 541.5l9.0 -2.1M1162.5 498.9l4.3 -3.2M1260.7 501.3l9.9 -3.0M1206.6 425.1l7.2 -2.3M1236.4 504.2l11.0 5.2M1206.4 342.7l10.0 -7.2M1186.4 514.0l5.8 -3.2M1190.2 330.1l3.2 -2.4M1251.0 338.6l6.1 -2.2M1177.1 399.7l6.6 -8.3M1187.8 538.0l12.2 -2.9M1134.0 507.0l5.4 0.3M1270.3 447.0l2.9 -3.0M1126.0 545.1l4.1 -2.8M1260.6 358.7l4.3 -3.4M1283.1 495.8l10.0 -0.9M1261.5 457.9l12.7 2.5M1262.7 510.4l9.0 -2.5M1254.6 387.1l12.8 0.8M1221.7 333.5l8.1 -3.7M1149.4 403.3l8.7 -2.3M1219.0 517.8l8.5 1.9M1223.0 456.9l11.3 -5.1M1190.0 381.0l9.9 -3.2M1236.0 260.8l8.9 -4.7M1244.1 538.9l5.4 -7.3M1209.3 528.4l4.0 1.8M1250.4 444.6l5.2 -5.6M1207.5 413.9l11.6 1.6M1161.1 386.0l8.2 -9.2M1175.5 506.9l7.8 -1.9M1212.7 335.7l1.8 -10.4M1263.4 353.9l6.3 -3.4M1176.7 432.6l2.9 -3.3M1251.2 524.8l5.8 -7.5M1286.2 439.5l9.2 -9.3M1231.7 441.9l5.8 -8.5M1246.6 435.7l9.1 -5.6M1204.6 486.9l3.9 -3.1M1260.3 533.5l9.8 -7.3M1262.4 425.1l4.9 -4.4" fill="none" stroke="#141414" stroke-width="0.8" opacity="0.5" stroke-dasharray="1 1.2"/>
<path d="M1354.7 446.1l3.2 5.1M1434.2 560.3l6.9 1.2M1473.6 480.3l-5.9 1.5M1422.5 561.1l-6.3 0.4M1380.5 374.8l-2.0 4.0M1304.6 545.9l2.9 1.2M1452.3 406.0l-2.9 3.2M1295.7 524.6l-5.6 7.0M1454.8 370.8l-3.1 7.3M1391.8 559.9l6.8 7.0M1451.8 354.5l7.5 0.3M1475.3 369.8l4.5 6.7M1322.8 544.0l0.1 3.4M1370.0 480.2l1.5 7.6M1317.9 529.8l3.1 6.8M1431.4 445.2l3.0 8.0M1505.1 527.0l-1.1 4.9M1448.6 536.5l3.6 6.3M1512.7 537.4l-1.6 4.9M1384.3 550.1l2.9 7.2M1424.8 551.8l-4.1 2.8M1382.9 482.8l-7.7 5.0M1474.0 545.4l-1.1 4.8M1483.2 532.0l-5.1 7.9M1365.2 371.0l-1.4 8.5M1330.9 519.3l-4.5 1.0M1426.0 503.1l0.5 4.4M1343.6 519.5l-4.9 3.8M1304.5 531.9l-3.5 3.0M1419.6 552.0l-6.2 2.3M1395.5 483.4l3.6 2.4M1326.3 508.3l2.9 6.3M1378.2 467.3l3.0 1.5M1517.3 435.4l7.0 2.4M1468.2 386.8l-1.6 5.2M1405.6 356.6l9.9 1.0M1486.7 460.4l-1.0 4.7M1466.3 447.0l-8.3 1.4M1343.4 360.4l3.4 2.5M1414.4 546.2l1.3 9.5M1496.9 366.3l-1.8 5.5M1344.2 477.9l-4.1 8.8M1440.7 439.7l0.7 4.1M1343.9 430.5l-8.9 2.8M1479.9 362.5l-6.2 5.0M1435.3 571.8l4.0 0.7M1460.7 561.5l-2.7 4.3M1422.4 521.0l5.0 1.7M1344.1 379.7l0.2 4.2M1339.8 383.9l-1.6 2.6M1451.8 395.5l9.4 1.1M1335.6 560.3l-8.4 3.7M1316.7 451.7l9.1 2.9M1481.1 492.1l0.8 5.3M1476.6 458.5l-1.6 3.7M1335.9 364.6l-4.3 5.4M1317.9 546.2l3.9 4.4M1320.4 412.5l-4.7 2.6M1323.3 461.5l5.0 7.8M1440.4 399.1l0.4 5.0M1344.3 397.0l4.1 9.0M1306.8 416.5l-3.2 1.1M1454.0 417.5l-3.1 0.2M1472.8 428.0l2.7 1.3M1478.7 469.4l5.0 3.3M1497.4 400.7l-0.9 3.9M1326.2 523.8l-2.7 3.4M1426.4 462.5l2.9 3.4M1427.3 509.8l-5.9 4.0M1455.5 443.0l-2.2 2.6M1473.7 426.8l-8.0 4.3M1399.4 355.4l-6.1 1.8M1488.1 411.4l7.4 4.9M1369.9 388.5l2.8 6.6M1388.3 467.0l7.4 3.0M1475.1 545.0l4.3 6.7M1373.2 519.5l8.9 1.7M1507.2 462.3l-0.3 6.7M1409.7 356.6l-4.5 0.5M1326.7 374.9l6.2 6.2M1447.6 395.5l7.2 0.4M1418.9 468.6l-2.2 3.0M1487.5 511.9l3.8 0.5M1399.5 463.7l2.5 3.0M1378.9 382.5l-2.6 8.7M1318.4 479.7l-2.9 3.0M1375.0 445.8l-5.9 3.2M1376.6 561.9l-4.1 3.5M1340.2 426.7l2.0 9.7M1472.2 555.5l-7.5 4.9M1296.5 467.4l-9.5 1.3M1342.3 446.1l-2.2 5.1M1408.2 367.4l1.4 6.4M1510.9 525.2l-7.3 1.5M1473.4 549.2l-3.0 1.1M1434.1 411.3l-2.6 4.2M1410.9 558.1l-1.8 4.4M1405.8 448.7l-5.0 0.8M1355.5 496.4l6.7 2.6M1507.7 466.6l4.2 4.7M1408.9 385.1l3.6 1.5M1352.7 442.7l2.9 3.7M1304.6 473.8l-6.4 3.5M1417.4 497.0l6.4 4.7M1391.8 474.2l-2.2 5.9M1356.7 406.0l5.1 4.2M1373.7 482.6l5.5 0.2M1485.7 405.2l-1.1 6.3M1353.1 524.2l3.0 1.7M1487.9 450.1l5.6 1.1M1386.9 516.0l4.3 1.5M1508.5 516.7l4.7 2.5M1366.5 502.6l-3.2 8.4M1476.2 467.5l-5.6 6.0M1461.8 458.0l-6.2 5.0M1498.0 380.4l-2.8 1.2M1463.2 482.6l0.1 9.7M1417.8 445.2l-7.1 5.7M1426.1 436.6l0.9 6.1M1453.2 417.3l2.3 6.5M1374.0 423.8l-7.0 5.5M1400.9 451.0l4.3 2.8M1317.9 480.3l-0.9 3.5M1499.3 424.2l-7.8 4.2M1508.4 397.6l2.1 9.1M1416.2 462.9l-8.2 2.1M1405.1 467.4l-3.1 4.8M1367.7 484.6l4.3 8.6M1442.3 469.1l5.4 1.7M1377.8 477.2l-2.1 8.9M1509.7 460.5l1.4 7.2M1517.1 428.6l-0.8 8.7M1323.9 422.9l-8.8 0.6M1403.9 376.6l-7.4 2.5M1491.8 445.9l4.4 2.4M1403.7 464.6l3.6 2.4M1431.4 486.5l4.4 8.9M1432.9 361.4l2.3 8.2M1355.8 506.0l5.1 0.1M1481.1 482.7l-2.2 3.8M1400.5 475.4l5.0 5.6M1418.4 443.7l3.8 1.5M1461.7 375.8l4.0 1.3M1406.3 535.6l-3.0 8.1M1464.3 424.0l-3.4 4.3M1323.6 411.5l8.9 2.9M1420.2 429.8l0.9 5.6M1420.3 566.0l1.4 7.2M1342.3 361.8l-8.8 1.9M1357.7 552.4l-4.3 2.8M1425.0 566.1l0.1 9.6M1340.8 438.9l-2.9 3.5M1356.3 547.2l0.4 8.5M1341.0 390.7l1.9 3.9M1511.3 416.8l-0.7 3.7M1408.9 438.0l1.0 3.3M1312.8 536.2l2.1 4.2M1328.7 415.2l2.4 2.2M1439.4 428.1l7.0 3.7M1305.7 412.1l-3.4 1.9M1387.7 538.5l-3.4 2.4M1366.6 513.1l3.7 9.0M1332.7 564.1l-0.1 4.6M1389.9 381.2l-2.9 3.8M1494.5 483.0l1.9 4.3M1426.3 399.4l-3.6 1.5M1404.0 473.0l5.5 6.3M1374.0 498.6l-1.1 5.1M1375.2 371.2l7.6 4.7M1359.1 499.8l6.5 2.3" fill="none" stroke="#141414" stroke-width="0.8" opacity="0.5"/>
<path d="M1368.6 463.6l7.5 3.8M1337.0 380.1l10.5 7.5M1350.1 442.0l7.8 12.4M1485.5 381.5l7.9 1.4M1290.9 503.6l9.0 3.1M1438.2 507.9l7.5 1.7M1482.1 430.5l5.9 2.1M1497.6 515.7l12.1 4.3M1321.9 396.2l5.0 2.1M1356.8 494.3l4.7 5.1M1480.4 479.1l8.8 4.2M1444.1 429.8l4.9 1.2M1479.2 525.2l12.8 6.6M1426.1 362.6l6.3 4.3M1310.0 528.5l10.2 8.5M1304.2 506.9l2.9 8.9M1458.9 536.8l13.7 7.0M1383.2 559.4l10.0 7.6M1456.8 537.1l5.4 1.3M1447.4 447.5l10.4 2.4M1501.2 380.5l11.1 6.2M1472.5 410.2l10.2 4.2M1510.8 494.2l5.5 1.4M1367.7 443.8l6.6 3.0M1356.7 382.5l7.1 2.7M1340.6 466.9l9.9 -0.0M1503.0 430.4l6.3 1.8M1415.8 426.4l5.2 13.0M1412.3 521.6l8.5 7.9M1391.9 522.9l8.2 11.5M1310.8 416.5l5.3 1.9M1349.7 396.0l9.9 8.0M1388.8 377.2l8.5 2.8M1459.6 370.7l8.5 9.7M1513.4 477.7l6.7 7.1M1328.4 473.1l3.7 3.5M1499.2 495.7l12.1 -0.8M1342.8 406.9l6.5 -0.6M1480.5 418.1l11.0 9.2M1500.8 389.6l7.8 11.2M1478.3 517.5l13.0 5.4M1358.9 434.2l8.5 7.1M1370.4 537.4l9.8 5.5M1431.0 534.8l10.5 7.2M1399.7 463.4l9.0 7.0M1302.8 505.4l5.0 4.6M1387.7 568.3l8.2 5.4M1328.7 513.2l4.3 2.6M1480.8 542.7l6.8 4.5M1438.8 466.8l9.5 1.4M1363.2 449.8l14.7 2.5M1322.5 418.0l9.9 -0.6M1415.8 429.6l7.3 4.5M1391.8 568.6l12.0 8.9M1509.1 490.2l10.6 6.5M1426.5 418.2l10.5 4.2M1507.0 459.2l8.3 2.8M1491.1 358.2l6.8 1.8M1442.8 451.8l5.3 7.4M1419.9 444.9l7.8 7.5M1416.2 440.4l11.6 9.1M1412.3 377.0l11.6 8.7M1343.3 373.2l10.1 2.5M1413.6 402.5l10.2 4.9M1310.4 466.4l8.8 3.5M1301.2 450.0l13.2 6.0M1412.8 511.4l13.9 7.7M1452.9 374.8l13.4 4.5M1375.7 390.2l8.0 10.9M1316.0 525.1l5.2 2.1M1339.4 435.0l4.2 6.1M1354.2 509.8l8.3 5.0M1491.9 490.5l10.4 11.0M1487.8 389.5l13.0 2.3M1363.9 522.3l6.2 1.4M1371.3 516.4l15.4 -1.4M1452.9 361.7l10.3 4.0M1471.9 377.2l14.0 5.9M1442.0 408.8l11.5 8.4M1420.0 377.3l3.4 4.0M1309.8 530.6l6.4 5.1M1444.8 436.9l4.0 5.2M1488.8 472.1l14.9 4.0M1319.3 463.9l14.5 -1.3M1471.3 359.9l9.0 8.7M1375.9 458.1l3.1 6.0M1481.8 439.7l3.9 4.3M1361.0 400.2l14.7 2.3M1421.9 361.7l8.0 6.2M1419.0 438.5l6.3 6.3M1285.4 481.2l9.0 4.5M1514.8 362.1l5.6 3.5M1441.0 412.8l7.1 3.4M1417.1 469.8l9.6 12.2M1516.2 359.6l14.6 -0.8M1465.2 493.2l11.5 3.3M1368.9 414.8l11.7 9.9M1443.4 419.8l13.2 -2.4M1457.1 465.5l10.6 3.1M1379.0 365.5l8.4 2.2M1396.7 433.9l7.7 4.3M1487.8 453.0l7.2 6.8M1417.1 419.4l7.0 4.4M1356.2 514.0l9.0 6.4M1503.4 427.9l3.6 4.6M1325.8 481.4l15.2 4.4M1367.5 524.7l5.7 -0.8M1397.4 552.5l5.6 5.8M1322.5 411.8l8.5 3.9M1330.9 486.4l14.0 3.8M1435.7 395.9l10.7 4.6M1302.6 532.5l13.5 -5.6M1363.8 382.5l11.5 9.0M1433.7 557.8l4.5 5.8M1360.5 519.1l12.0 3.5M1363.0 364.8l9.3 2.0M1294.6 491.7l11.1 3.3M1344.1 455.3l3.4 3.9M1500.5 477.8l9.6 6.8M1453.4 425.4l5.3 2.8" fill="none" stroke="#141414" stroke-width="0.8" opacity="0.45" stroke-dasharray="1 1.3"/>
<path d="M1360.6 204.4l3.9 -4.1M1314.7 294.3l1.2 -4.1M1359.4 204.4l2.4 -2.3M1332.7 268.6l2.4 -3.1M1361.7 225.5l5.3 -3.2M1316.1 302.5l2.9 -4.4M1296.5 311.1l4.9 -4.7M1314.8 259.0l3.0 -6.8M1342.7 254.5l-0.1 -4.0M1299.1 311.2l2.2 -7.7M1295.8 293.6l4.6 -4.5M1372.3 208.6l3.7 -4.0M1295.5 293.9l2.1 -4.3M1356.8 229.7l2.3 -3.2M1322.9 268.8l3.6 -5.4M1320.5 248.6l2.3 -2.9M1306.7 276.3l1.7 -3.6M1292.2 308.3l5.0 -4.8M1375.4 198.8l3.1 -5.4M1337.6 235.6l2.5 -7.4M1304.6 278.9l3.7 -5.4M1321.3 264.6l1.7 -5.8M1351.1 236.5l1.3 -3.9M1344.3 228.6l2.3 -7.2M1334.8 257.8l4.7 -6.1" fill="none" stroke="#141414" stroke-width="0.8" opacity="0.5"/>
<path d="M1189.7 544.7l6.1 1.2M1226.1 536.7l5.5 1.7M1204.0 553.2l7.0 4.5M1233.1 531.2l7.0 -3.7M1137.7 534.3l4.1 2.0M1135.2 540.0l5.7 0.8M1133.3 541.1l8.3 -3.5M1211.0 542.6l6.1 -4.4M1141.2 549.0l5.2 0.4M1188.6 536.7l5.2 -1.2M1195.0 531.6l4.0 0.9M1213.9 537.7l8.0 -0.9M1133.7 547.8l7.9 1.9M1147.8 541.8l5.2 0.7M1127.6 542.4l4.6 -2.3M1213.2 538.3l7.2 -3.2M1167.1 540.8l6.2 1.8M1240.4 535.4l4.5 2.7M1207.2 539.2l3.4 -0.3M1218.8 540.6l7.7 -3.3M1218.9 530.7l6.5 -0.4M1181.2 542.9l5.7 1.1M1236.0 542.3l5.7 -1.8M1187.5 553.1l5.2 -1.5M1127.2 549.0l5.5 -3.1M1220.5 551.6l3.4 0.6M1226.6 532.8l3.5 0.6M1218.4 545.8l6.4 3.5M1183.8 531.5l7.0 1.3M1175.5 546.4l6.6 4.9M1140.6 539.4l6.1 -0.0M1122.8 557.7l4.9 -0.2M1154.6 554.0l6.1 1.7M1187.4 541.8l7.9 2.3M1224.7 554.0l4.5 0.4M1147.9 531.5l5.5 -1.9M1184.6 546.3l5.2 -0.4M1224.6 535.6l3.1 1.3M1162.2 544.9l5.3 -1.2M1194.3 539.1l4.7 -0.4M1213.0 552.5l5.3 3.8M1180.2 556.2l2.6 -2.1M1177.5 547.9l3.2 0.8M1232.4 532.0l8.4 -1.5M1193.8 552.4l5.9 -0.7M1208.3 548.9l8.0 -0.5M1140.7 555.7l4.1 1.0M1134.9 532.7l5.4 1.0M1206.3 537.2l5.6 -6.3M1209.8 534.3l2.8 1.6M1229.0 538.2l4.3 0.8M1196.5 538.9l8.3 -1.6M1163.5 553.6l3.9 -0.3M1224.3 557.4l5.3 -0.4M1204.0 536.3l6.3 0.4M1134.0 543.0l7.1 -0.4M1136.6 553.2l3.5 -1.3M1240.2 557.9l4.4 1.8M1166.5 551.0l5.9 -0.9M1241.0 532.6l5.1 -4.2" fill="none" stroke="#141414" stroke-width="0.9" opacity="0.6"/>
</g></g>

</svg></div>
<div id="rpanel" class="a"></div>
<div class="a" style="left:1709px;top:152px;width:35px;height:34px;border-radius:5px;background:linear-gradient(#f3f3f8,#fcfcff 40%,#dfe2f4)"></div>
<svg class="a" style="left:1709px;top:152px" width="35" height="34"><text x="15.5" y="28" font-family="Liberation Sans,sans-serif" font-size="27" fill="#a2a2a8" opacity=".55">I</text><text x="14" y="26.500" font-family="Liberation Sans,sans-serif" font-size="27" fill="#dcdce4" stroke="#8c8c92" stroke-width="1">I</text></svg>
<div class="a" style="left:1759px;top:152px;width:35px;height:34px;border-radius:5px;background:linear-gradient(#f3f3f8,#fcfcff 40%,#dfe2f4)"></div>
<svg class="a" style="left:1759px;top:152px" width="35" height="34"><text x="11" y="28" font-family="Liberation Sans,sans-serif" font-size="27" fill="#a2a2a8" opacity=".55">D</text><text x="9.5" y="26.500" font-family="Liberation Sans,sans-serif" font-size="27" fill="#dcdce4" stroke="#8c8c92" stroke-width="1">D</text></svg>
<div class="a" style="left:1809px;top:152px;width:35px;height:34px;border-radius:5px;background:linear-gradient(#f3f3f8,#fcfcff 40%,#dfe2f4)"></div>
<svg class="a" style="left:1809px;top:152px" width="35" height="34"><text x="12" y="28" font-family="Liberation Sans,sans-serif" font-size="27" fill="#a2a2a8" opacity=".55">E</text><text x="10.5" y="26.500" font-family="Liberation Sans,sans-serif" font-size="27" fill="#dcdce4" stroke="#8c8c92" stroke-width="1">E</text></svg>
<div class="a" style="left:1859px;top:152px;width:35px;height:34px;border-radius:5px;box-sizing:border-box;border:1px solid #9a9a9a;background:linear-gradient(#f2f2f6,#fbfbff 45%,#e3e5f4)"></div>
<svg class="a" style="left:1859px;top:152px" width="35" height="34"><text x="9.5" y="29" font-family="Liberation Sans,sans-serif" font-weight="bold" font-size="29" fill="#8c8c8c" opacity=".7" textLength="21" lengthAdjust="spacingAndGlyphs">A</text><text x="7.500" y="27" font-family="Liberation Sans,sans-serif" font-weight="bold" font-size="29" fill="#d9a514" textLength="21" lengthAdjust="spacingAndGlyphs">A</text></svg>
<div class="a" style="left:1709.30px;top:195.33px;font-size:14.00px;line-height:16.10px;letter-spacing:-0.254px;">Elevation</div>
<div class="a" style="left:1707px;top:217px;width:186px;height:576px;box-sizing:border-box;border:1px solid #828790;background:#f0f0f0"></div>
<div class="a" style="left:1709px;top:219px;width:161px;height:572px;background:#00005a"></div>
<svg class="a" style="left:1874px;top:224px" width="14" height="10"><path d="M1.500 8L7 2.500L12.500 8" fill="none" stroke="#a8a8a8" stroke-width="1.600"/></svg>
<svg class="a" style="left:1874px;top:775px" width="14" height="10"><path d="M1.500 2L7 7.500L12.500 2" fill="none" stroke="#a8a8a8" stroke-width="1.600"/></svg>
<div class="a" style="left:1710.00px;top:838.03px;font-size:14.00px;line-height:16.10px;letter-spacing:-0.242px;">Point</div>
<div class="a" style="left:1749px;top:832px;width:142.5px;height:28px;box-sizing:border-box;border:1px solid #7c7c7c;box-shadow:inset 1px 1px 0 #b4b4b4;background:#f0f0f0"></div>
<div class="a" style="left:1712.00px;top:874.33px;font-size:14.00px;line-height:16.10px;letter-spacing:-0.617px;">Line</div>
<div class="a" style="left:1749px;top:870px;width:142.5px;height:28px;box-sizing:border-box;border:1px solid #7c7c7c;box-shadow:inset 1px 1px 0 #b4b4b4;background:#f0f0f0"></div>
<div class="a" style="left:1709.30px;top:914.33px;font-size:14.00px;line-height:16.10px;letter-spacing:-0.506px;">North</div>
<div class="a" style="left:1749px;top:908px;width:142.5px;height:28px;box-sizing:border-box;border:1px solid #7c7c7c;box-shadow:inset 1px 1px 0 #b4b4b4;background:#f0f0f0"></div>
<div class="a" style="left:1711.40px;top:952.33px;font-size:14.00px;line-height:16.10px;letter-spacing:-0.228px;">East</div>
<div class="a" style="left:1749px;top:946px;width:142.5px;height:28px;box-sizing:border-box;border:1px solid #7c7c7c;box-shadow:inset 1px 1px 0 #b4b4b4;background:#f0f0f0"></div>
<div id="status" class="a"></div>
<div class="a" style="left:2px;top:985px;width:1902px;height:1px;background:#fff"></div>
<div class="a" style="left:6.50px;top:991.88px;font-size:15.60px;line-height:17.94px;letter-spacing:-0.218px;">Ready</div>
<div class="a" style="left:1088.00px;top:990.38px;font-size:15.60px;line-height:17.94px;letter-spacing:-0.028px;">North: 1,189,613.170</div>
<div class="a" style="left:1252.00px;top:990.38px;font-size:15.60px;line-height:17.94px;letter-spacing:0.124px;">East: 1,795,124.774</div>
<div class="a" style="left:1693px;top:990px;width:34px;height:20px;box-sizing:border-box;border:1px solid #a8a8a8;border-right-color:#fff;border-bottom-color:#fff"></div>
<div class="a" style="left:1695.54px;top:991.22px;font-size:16.00px;line-height:18.40px;color:#8f8f8f;">TAB</div>
<div class="a" style="left:1730px;top:990px;width:48.5px;height:20px;box-sizing:border-box;border:1px solid #a8a8a8;border-right-color:#fff;border-bottom-color:#fff"></div>
<div class="a" style="left:1732.96px;top:991.22px;font-size:16.00px;line-height:18.40px;color:#8f8f8f;">SNAP</div>
<div class="a" style="left:1782px;top:990px;width:21px;height:20px;box-sizing:border-box;border:1px solid #a8a8a8;border-right-color:#fff;border-bottom-color:#fff"></div>
<div class="a" style="left:1785.89px;top:991.22px;font-size:16.00px;line-height:18.40px;color:#111;">Ft</div>
<div class="a" style="left:1806px;top:990px;width:38px;height:20px;box-sizing:border-box;border:1px solid #a8a8a8;border-right-color:#fff;border-bottom-color:#fff"></div>
<div class="a" style="left:1807.28px;top:991.22px;font-size:16.00px;line-height:18.40px;color:#8f8f8f;">NUM</div>
<div class="a" style="left:1848px;top:990px;width:48px;height:20px;background:repeating-linear-gradient(#00008c 0,#00008c 4px,#e8e8f4 4px,#e8e8f4 5px);"></div>
<svg class="a" style="left:1893px;top:999px" width="11" height="11"><path d="M1 11L11 1M5 11l6-6M9 11l2-2" stroke="#b0b0b0" stroke-width="1"/></svg>
<div id="cm" class="a">
<div class="a" style="left:1.500px;top:112.3px;width:237.500px;height:24px;background:#91c9f7"></div>
<div class="a" style="left:36.20px;top:6.55px;font-size:15.30px;line-height:17.59px;letter-spacing:-0.253px;">Entry Mode</div>
<div class="a" style="left:211.30px;top:6.55px;font-size:15.30px;line-height:17.59px;">E</div>
<div class="a" style="left:36.20px;top:38.15px;font-size:15.30px;line-height:17.59px;letter-spacing:-0.132px;color:#6d6d6d;">Point Editor</div>
<div class="a" style="left:36.20px;top:61.75px;font-size:15.30px;line-height:17.59px;letter-spacing:-0.195px;color:#6d6d6d;">Line Editor</div>
<div class="a" style="left:36.20px;top:92.95px;font-size:15.30px;line-height:17.59px;letter-spacing:-0.069px;">Import File</div>
<div class="a" style="left:36.20px;top:116.55px;font-size:15.30px;line-height:17.59px;letter-spacing:-0.026px;">Align Image</div>
<div class="a" style="left:36.20px;top:140.65px;font-size:15.30px;line-height:17.59px;letter-spacing:-0.429px;color:#6d6d6d;">Copy</div>
<div class="a" style="left:177.30px;top:140.65px;font-size:15.30px;line-height:17.59px;letter-spacing:-0.380px;color:#6d6d6d;">Ctrl+C</div>
<div class="a" style="left:36.20px;top:164.35px;font-size:15.30px;line-height:17.59px;letter-spacing:-1.025px;">Paste</div>
<div class="a" style="left:177.30px;top:164.35px;font-size:15.30px;line-height:17.59px;letter-spacing:-0.239px;">Ctrl+V</div>
<div class="a" style="left:36.20px;top:195.45px;font-size:15.30px;line-height:17.59px;letter-spacing:-0.095px;">Display</div>
<svg class="a" style="left:222px;top:198.5px" width="8" height="10"><path d="M1.500 1l4 4-4 4" fill="none" stroke="#333" stroke-width="1.200"/></svg>
<div class="a" style="left:36.20px;top:219.55px;font-size:15.30px;line-height:17.59px;letter-spacing:-0.666px;">Plus Marks</div>
<div class="a" style="left:203.80px;top:219.55px;font-size:15.30px;line-height:17.59px;letter-spacing:-1.427px;">F2</div>
<div class="a" style="left:36.20px;top:243.15px;font-size:15.30px;line-height:17.59px;letter-spacing:-0.334px;">Plus All</div>
<div class="a" style="left:203.80px;top:243.15px;font-size:15.30px;line-height:17.59px;letter-spacing:-1.427px;">F2</div>
<div class="a" style="left:36.20px;top:267.65px;font-size:15.30px;line-height:17.59px;letter-spacing:-0.469px;">Snap Enabled</div>
<div class="a" style="left:36.20px;top:298.35px;font-size:15.30px;line-height:17.59px;letter-spacing:-0.269px;color:#6d6d6d;">Undo</div>
<div class="a" style="left:177.30px;top:298.35px;font-size:15.30px;line-height:17.59px;letter-spacing:-0.096px;color:#6d6d6d;">Ctrl+Z</div>
<div class="a" style="left:36.20px;top:322.45px;font-size:15.30px;line-height:17.59px;letter-spacing:-0.234px;color:#6d6d6d;">Delete Selected</div>
<div class="a" style="left:36.20px;top:346.55px;font-size:15.30px;line-height:17.59px;letter-spacing:-0.687px;">Cancel</div>
<div class="a" style="left:32px;top:29.2px;width:207px;height:1px;background:#d0d0d0"></div>
<div class="a" style="left:32px;top:84px;width:207px;height:1px;background:#d0d0d0"></div>
<div class="a" style="left:32px;top:187.3px;width:207px;height:1px;background:#d0d0d0"></div>
<div class="a" style="left:32px;top:290.3px;width:207px;height:1px;background:#d0d0d0"></div>
</div>
</body></html>
